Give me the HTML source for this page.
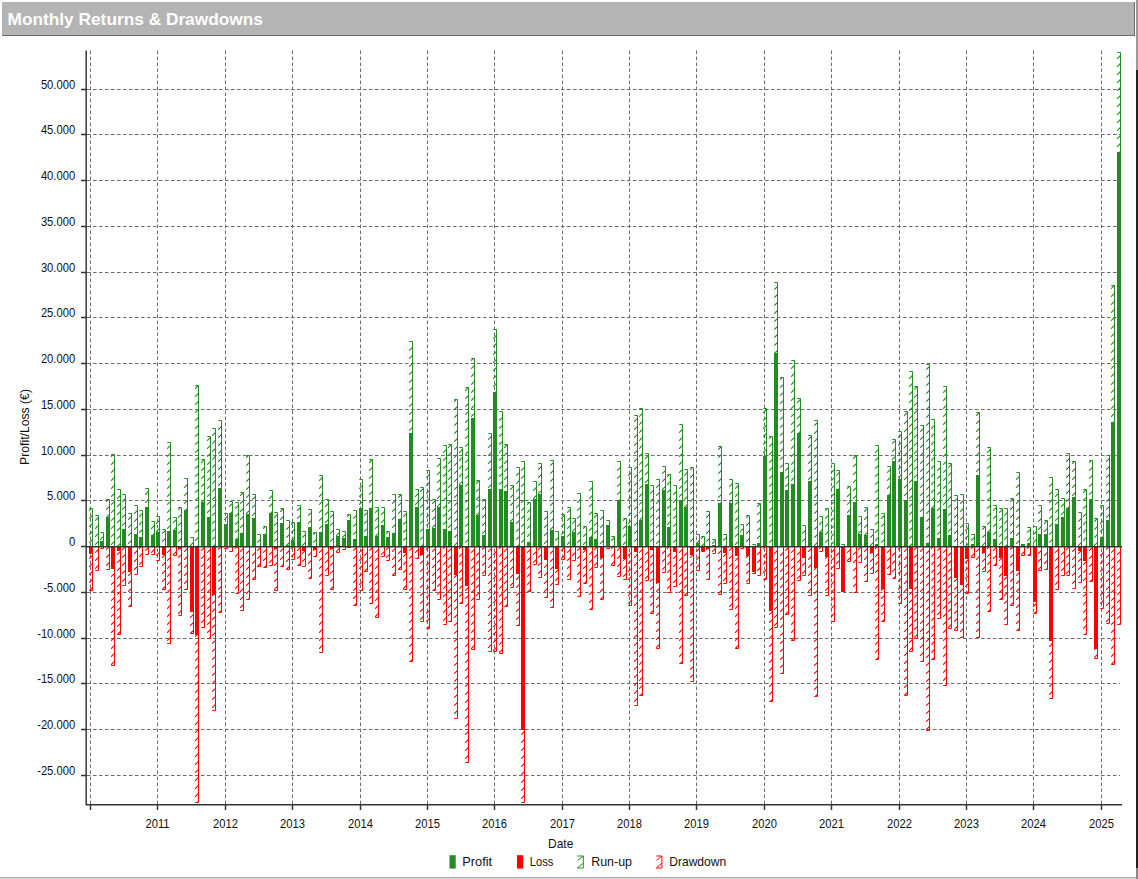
<!DOCTYPE html>
<html><head><meta charset="utf-8"><title>Monthly Returns &amp; Drawdowns</title>
<style>
html,body{margin:0;padding:0;background:#fff;}
body{width:1138px;height:879px;position:relative;overflow:hidden;font-family:"Liberation Sans",sans-serif;}
#hdr{position:absolute;left:1.5px;top:2px;width:1132.5px;height:33px;background:#b4b4b4;border-right:1.5px solid #6a6a6a;border-bottom:1.5px solid #6a6a6a;box-sizing:content-box;}
#hdr span{position:absolute;left:6px;top:6.5px;color:#fff;font-weight:bold;font-size:17.3px;line-height:20px;white-space:nowrap;}
#rb{position:absolute;left:1136px;top:0;width:2px;height:879px;background:linear-gradient(#9a9a9a 0,#9a9a9a 70px,#222 70px,#222 868px,#888 868px);}
#bb{position:absolute;left:0;top:877px;width:1136px;height:2px;background:linear-gradient(#a8a8a8 0,#a8a8a8 1px,#d8d8d8 1px);}
</style></head><body>
<div id="hdr"><span>Monthly Returns &amp; Drawdowns</span></div>
<div id="rb"></div><div id="bb"></div>
<svg width="1138" height="879" viewBox="0 0 1138 879" style="position:absolute;left:0;top:0">
<path d="M90.5 50.5V804M157.5 50.5V804M225.5 50.5V804M292.5 50.5V804M360.5 50.5V804M427.5 50.5V804M494.5 50.5V804M562.5 50.5V804M629.5 50.5V804M696.5 50.5V804M764.5 50.5V804M831.5 50.5V804M899.5 50.5V804M966.5 50.5V804M1033.5 50.5V804M1101.5 50.5V804M87 775.5H1120M87 729.5H1120M87 683.5H1120M87 638.5H1120M87 592.5H1120M87 546.5H1120M87 500.5H1120M87 455.5H1120M87 409.5H1120M87 363.5H1120M87 317.5H1120M87 272.5H1120M87 226.5H1120M87 180.5H1120M87 134.5H1120M87 89.5H1120" stroke="#6c6c6c" stroke-width="1" stroke-dasharray="3.6 2.4" fill="none"/>
<path d="M89.5 510.3L90.8 509M89.5 518.3L92.5 515.3M89.5 526.3L92.5 523.3M89.5 534.3L92.5 531.3M89.5 542.3L92.5 539.3M95.5 520.3L98.5 517.3M95.5 528.3L98.5 525.3M95.5 536.3L98.5 533.3M95.5 544.3L98.5 541.3M100.5 539.3L103.5 536.3M101.8 546L103.5 544.3M106.5 501.3L107.8 500M106.5 509.3L109.5 506.3M106.5 517.3L109.5 514.3M106.5 525.3L109.5 522.3M106.5 533.3L109.5 530.3M106.5 541.3L109.5 538.3M111.5 456.3L112.8 455M111.5 464.3L114.5 461.3M111.5 472.3L114.5 469.3M111.5 480.3L114.5 477.3M111.5 488.3L114.5 485.3M111.5 496.3L114.5 493.3M111.5 504.3L114.5 501.3M111.5 512.3L114.5 509.3M111.5 520.3L114.5 517.3M111.5 528.3L114.5 525.3M111.5 536.3L114.5 533.3M111.5 544.3L114.5 541.3M117.5 498.3L120.5 495.3M117.5 506.3L120.5 503.3M117.5 514.3L120.5 511.3M117.5 522.3L120.5 519.3M117.5 530.3L120.5 527.3M117.5 538.3L120.5 535.3M117.8 546L120.5 543.3M122.5 501.3L125.5 498.3M122.5 509.3L125.5 506.3M122.5 517.3L125.5 514.3M122.5 525.3L125.5 522.3M122.5 533.3L125.5 530.3M122.5 541.3L125.5 538.3M128.5 519.3L131.5 516.3M128.5 527.3L131.5 524.3M128.5 535.3L131.5 532.3M128.5 543.3L131.5 540.3M134.5 513.3L137.5 510.3M134.5 521.3L137.5 518.3M134.5 529.3L137.5 526.3M134.5 537.3L137.5 534.3M134.5 545.3L137.5 542.3M139.5 516.3L142.5 513.3M139.5 524.3L142.5 521.3M139.5 532.3L142.5 529.3M139.5 540.3L142.5 537.3M141.8 546L142.5 545.3M145.5 494.3L148.5 491.3M145.5 502.3L148.5 499.3M145.5 510.3L148.5 507.3M145.5 518.3L148.5 515.3M145.5 526.3L148.5 523.3M145.5 534.3L148.5 531.3M145.5 542.3L148.5 539.3M151.5 528.3L154.5 525.3M151.5 536.3L154.5 533.3M151.5 544.3L154.5 541.3M156.5 523.3L159.5 520.3M156.5 531.3L159.5 528.3M156.5 539.3L159.5 536.3M157.8 546L159.5 544.3M162.5 533.3L165.5 530.3M162.5 541.3L165.5 538.3M167.5 448.3L170.5 445.3M167.5 456.3L170.5 453.3M167.5 464.3L170.5 461.3M167.5 472.3L170.5 469.3M167.5 480.3L170.5 477.3M167.5 488.3L170.5 485.3M167.5 496.3L170.5 493.3M167.5 504.3L170.5 501.3M167.5 512.3L170.5 509.3M167.5 520.3L170.5 517.3M167.5 528.3L170.5 525.3M167.5 536.3L170.5 533.3M167.5 544.3L170.5 541.3M173.5 522.3L176.5 519.3M173.5 530.3L176.5 527.3M173.5 538.3L176.5 535.3M173.8 546L176.5 543.3M178.5 509.3L179.8 508M178.5 517.3L181.5 514.3M178.5 525.3L181.5 522.3M178.5 533.3L181.5 530.3M178.5 541.3L181.5 538.3M184.5 487.3L187.5 484.3M184.5 495.3L187.5 492.3M184.5 503.3L187.5 500.3M184.5 511.3L187.5 508.3M184.5 519.3L187.5 516.3M184.5 527.3L187.5 524.3M184.5 535.3L187.5 532.3M184.5 543.3L187.5 540.3M190.5 545.3L193.5 542.3M195.5 388.3L197.8 386M195.5 396.3L198.5 393.3M195.5 404.3L198.5 401.3M195.5 412.3L198.5 409.3M195.5 420.3L198.5 417.3M195.5 428.3L198.5 425.3M195.5 436.3L198.5 433.3M195.5 444.3L198.5 441.3M195.5 452.3L198.5 449.3M195.5 460.3L198.5 457.3M195.5 468.3L198.5 465.3M195.5 476.3L198.5 473.3M195.5 484.3L198.5 481.3M195.5 492.3L198.5 489.3M195.5 500.3L198.5 497.3M195.5 508.3L198.5 505.3M195.5 516.3L198.5 513.3M195.5 524.3L198.5 521.3M195.5 532.3L198.5 529.3M195.5 540.3L198.5 537.3M197.8 546L198.5 545.3M201.5 462.3L203.8 460M201.5 470.3L204.5 467.3M201.5 478.3L204.5 475.3M201.5 486.3L204.5 483.3M201.5 494.3L204.5 491.3M201.5 502.3L204.5 499.3M201.5 510.3L204.5 507.3M201.5 518.3L204.5 515.3M201.5 526.3L204.5 523.3M201.5 534.3L204.5 531.3M201.5 542.3L204.5 539.3M207.5 440.3L210.5 437.3M207.5 448.3L210.5 445.3M207.5 456.3L210.5 453.3M207.5 464.3L210.5 461.3M207.5 472.3L210.5 469.3M207.5 480.3L210.5 477.3M207.5 488.3L210.5 485.3M207.5 496.3L210.5 493.3M207.5 504.3L210.5 501.3M207.5 512.3L210.5 509.3M207.5 520.3L210.5 517.3M207.5 528.3L210.5 525.3M207.5 536.3L210.5 533.3M207.5 544.3L210.5 541.3M212.5 435.3L215.5 432.3M212.5 443.3L215.5 440.3M212.5 451.3L215.5 448.3M212.5 459.3L215.5 456.3M212.5 467.3L215.5 464.3M212.5 475.3L215.5 472.3M212.5 483.3L215.5 480.3M212.5 491.3L215.5 488.3M212.5 499.3L215.5 496.3M212.5 507.3L215.5 504.3M212.5 515.3L215.5 512.3M212.5 523.3L215.5 520.3M212.5 531.3L215.5 528.3M212.5 539.3L215.5 536.3M213.8 546L215.5 544.3M218.5 429.3L221.5 426.3M218.5 437.3L221.5 434.3M218.5 445.3L221.5 442.3M218.5 453.3L221.5 450.3M218.5 461.3L221.5 458.3M218.5 469.3L221.5 466.3M218.5 477.3L221.5 474.3M218.5 485.3L221.5 482.3M218.5 493.3L221.5 490.3M218.5 501.3L221.5 498.3M218.5 509.3L221.5 506.3M218.5 517.3L221.5 514.3M218.5 525.3L221.5 522.3M218.5 533.3L221.5 530.3M218.5 541.3L221.5 538.3M224.5 519.3L227.5 516.3M224.5 527.3L227.5 524.3M224.5 535.3L227.5 532.3M224.5 543.3L227.5 540.3M229.5 506.3L232.5 503.3M229.5 514.3L232.5 511.3M229.5 522.3L232.5 519.3M229.5 530.3L232.5 527.3M229.5 538.3L232.5 535.3M229.8 546L232.5 543.3M235.5 508.3L238.5 505.3M235.5 516.3L238.5 513.3M235.5 524.3L238.5 521.3M235.5 532.3L238.5 529.3M235.5 540.3L238.5 537.3M237.8 546L238.5 545.3M240.5 495.3L242.8 493M240.5 503.3L243.5 500.3M240.5 511.3L243.5 508.3M240.5 519.3L243.5 516.3M240.5 527.3L243.5 524.3M240.5 535.3L243.5 532.3M240.5 543.3L243.5 540.3M246.5 457.3L247.8 456M246.5 465.3L249.5 462.3M246.5 473.3L249.5 470.3M246.5 481.3L249.5 478.3M246.5 489.3L249.5 486.3M246.5 497.3L249.5 494.3M246.5 505.3L249.5 502.3M246.5 513.3L249.5 510.3M246.5 521.3L249.5 518.3M246.5 529.3L249.5 526.3M246.5 537.3L249.5 534.3M246.5 545.3L249.5 542.3M252.5 499.3L255.5 496.3M252.5 507.3L255.5 504.3M252.5 515.3L255.5 512.3M252.5 523.3L255.5 520.3M252.5 531.3L255.5 528.3M252.5 539.3L255.5 536.3M253.8 546L255.5 544.3M257.5 542.3L260.5 539.3M263.5 528.3L264.8 527M263.5 536.3L266.5 533.3M263.5 544.3L266.5 541.3M269.5 498.3L272.5 495.3M269.5 506.3L272.5 503.3M269.5 514.3L272.5 511.3M269.5 522.3L272.5 519.3M269.5 530.3L272.5 527.3M269.5 538.3L272.5 535.3M269.8 546L272.5 543.3M274.5 517.3L277.5 514.3M274.5 525.3L277.5 522.3M274.5 533.3L277.5 530.3M274.5 541.3L277.5 538.3M280.5 511.3L282.8 509M280.5 519.3L283.5 516.3M280.5 527.3L283.5 524.3M280.5 535.3L283.5 532.3M280.5 543.3L283.5 540.3M286.5 529.3L289.5 526.3M286.5 537.3L289.5 534.3M286.5 545.3L289.5 542.3M291.5 524.3L292.8 523M291.5 532.3L294.5 529.3M291.5 540.3L294.5 537.3M293.8 546L294.5 545.3M297.5 510.3L300.5 507.3M297.5 518.3L300.5 515.3M297.5 526.3L300.5 523.3M297.5 534.3L300.5 531.3M297.5 542.3L300.5 539.3M302.5 537.3L305.5 534.3M302.5 545.3L305.5 542.3M308.5 515.3L311.5 512.3M308.5 523.3L311.5 520.3M308.5 531.3L311.5 528.3M308.5 539.3L311.5 536.3M309.8 546L311.5 544.3M313.5 534.3L314.8 533M313.5 542.3L316.5 539.3M319.5 480.3L322.5 477.3M319.5 488.3L322.5 485.3M319.5 496.3L322.5 493.3M319.5 504.3L322.5 501.3M319.5 512.3L322.5 509.3M319.5 520.3L322.5 517.3M319.5 528.3L322.5 525.3M319.5 536.3L322.5 533.3M319.5 544.3L322.5 541.3M325.5 506.3L328.5 503.3M325.5 514.3L328.5 511.3M325.5 522.3L328.5 519.3M325.5 530.3L328.5 527.3M325.5 538.3L328.5 535.3M325.8 546L328.5 543.3M330.5 517.3L333.5 514.3M330.5 525.3L333.5 522.3M330.5 533.3L333.5 530.3M330.5 541.3L333.5 538.3M336.5 535.3L339.5 532.3M336.5 543.3L339.5 540.3M342.5 537.3L345.5 534.3M342.5 545.3L345.5 542.3M347.5 516.3L348.8 515M347.5 524.3L350.5 521.3M347.5 532.3L350.5 529.3M347.5 540.3L350.5 537.3M349.8 546L350.5 545.3M353.5 518.3L356.5 515.3M353.5 526.3L356.5 523.3M353.5 534.3L356.5 531.3M353.5 542.3L356.5 539.3M359.5 488.3L362.5 485.3M359.5 496.3L362.5 493.3M359.5 504.3L362.5 501.3M359.5 512.3L362.5 509.3M359.5 520.3L362.5 517.3M359.5 528.3L362.5 525.3M359.5 536.3L362.5 533.3M359.5 544.3L362.5 541.3M364.5 515.3L367.5 512.3M364.5 523.3L367.5 520.3M364.5 531.3L367.5 528.3M364.5 539.3L367.5 536.3M365.8 546L367.5 544.3M369.5 462.3L371.8 460M369.5 470.3L372.5 467.3M369.5 478.3L372.5 475.3M369.5 486.3L372.5 483.3M369.5 494.3L372.5 491.3M369.5 502.3L372.5 499.3M369.5 510.3L372.5 507.3M369.5 518.3L372.5 515.3M369.5 526.3L372.5 523.3M369.5 534.3L372.5 531.3M369.5 542.3L372.5 539.3M375.5 512.3L378.5 509.3M375.5 520.3L378.5 517.3M375.5 528.3L378.5 525.3M375.5 536.3L378.5 533.3M375.5 544.3L378.5 541.3M381.5 514.3L384.5 511.3M381.5 522.3L384.5 519.3M381.5 530.3L384.5 527.3M381.5 538.3L384.5 535.3M381.8 546L384.5 543.3M386.5 533.3L387.8 532M386.5 541.3L389.5 538.3M392.5 503.3L395.5 500.3M392.5 511.3L395.5 508.3M392.5 519.3L395.5 516.3M392.5 527.3L395.5 524.3M392.5 535.3L395.5 532.3M392.5 543.3L395.5 540.3M398.5 497.3L400.8 495M398.5 505.3L401.5 502.3M398.5 513.3L401.5 510.3M398.5 521.3L401.5 518.3M398.5 529.3L401.5 526.3M398.5 537.3L401.5 534.3M398.5 545.3L401.5 542.3M403.5 516.3L406.5 513.3M403.5 524.3L406.5 521.3M403.5 532.3L406.5 529.3M403.5 540.3L406.5 537.3M405.8 546L406.5 545.3M409.5 350.3L412.5 347.3M409.5 358.3L412.5 355.3M409.5 366.3L412.5 363.3M409.5 374.3L412.5 371.3M409.5 382.3L412.5 379.3M409.5 390.3L412.5 387.3M409.5 398.3L412.5 395.3M409.5 406.3L412.5 403.3M409.5 414.3L412.5 411.3M409.5 422.3L412.5 419.3M409.5 430.3L412.5 427.3M409.5 438.3L412.5 435.3M409.5 446.3L412.5 443.3M409.5 454.3L412.5 451.3M409.5 462.3L412.5 459.3M409.5 470.3L412.5 467.3M409.5 478.3L412.5 475.3M409.5 486.3L412.5 483.3M409.5 494.3L412.5 491.3M409.5 502.3L412.5 499.3M409.5 510.3L412.5 507.3M409.5 518.3L412.5 515.3M409.5 526.3L412.5 523.3M409.5 534.3L412.5 531.3M409.5 542.3L412.5 539.3M415.5 496.3L418.5 493.3M415.5 504.3L418.5 501.3M415.5 512.3L418.5 509.3M415.5 520.3L418.5 517.3M415.5 528.3L418.5 525.3M415.5 536.3L418.5 533.3M415.5 544.3L418.5 541.3M420.5 491.3L423.5 488.3M420.5 499.3L423.5 496.3M420.5 507.3L423.5 504.3M420.5 515.3L423.5 512.3M420.5 523.3L423.5 520.3M420.5 531.3L423.5 528.3M420.5 539.3L423.5 536.3M421.8 546L423.5 544.3M426.5 477.3L429.5 474.3M426.5 485.3L429.5 482.3M426.5 493.3L429.5 490.3M426.5 501.3L429.5 498.3M426.5 509.3L429.5 506.3M426.5 517.3L429.5 514.3M426.5 525.3L429.5 522.3M426.5 533.3L429.5 530.3M426.5 541.3L429.5 538.3M432.5 503.3L435.5 500.3M432.5 511.3L435.5 508.3M432.5 519.3L435.5 516.3M432.5 527.3L435.5 524.3M432.5 535.3L435.5 532.3M432.5 543.3L435.5 540.3M437.5 466.3L440.5 463.3M437.5 474.3L440.5 471.3M437.5 482.3L440.5 479.3M437.5 490.3L440.5 487.3M437.5 498.3L440.5 495.3M437.5 506.3L440.5 503.3M437.5 514.3L440.5 511.3M437.5 522.3L440.5 519.3M437.5 530.3L440.5 527.3M437.5 538.3L440.5 535.3M437.8 546L440.5 543.3M443.5 452.3L446.5 449.3M443.5 460.3L446.5 457.3M443.5 468.3L446.5 465.3M443.5 476.3L446.5 473.3M443.5 484.3L446.5 481.3M443.5 492.3L446.5 489.3M443.5 500.3L446.5 497.3M443.5 508.3L446.5 505.3M443.5 516.3L446.5 513.3M443.5 524.3L446.5 521.3M443.5 532.3L446.5 529.3M443.5 540.3L446.5 537.3M445.8 546L446.5 545.3M448.5 447.3L450.8 445M448.5 455.3L451.5 452.3M448.5 463.3L451.5 460.3M448.5 471.3L451.5 468.3M448.5 479.3L451.5 476.3M448.5 487.3L451.5 484.3M448.5 495.3L451.5 492.3M448.5 503.3L451.5 500.3M448.5 511.3L451.5 508.3M448.5 519.3L451.5 516.3M448.5 527.3L451.5 524.3M448.5 535.3L451.5 532.3M448.5 543.3L451.5 540.3M454.5 401.3L455.8 400M454.5 409.3L457.5 406.3M454.5 417.3L457.5 414.3M454.5 425.3L457.5 422.3M454.5 433.3L457.5 430.3M454.5 441.3L457.5 438.3M454.5 449.3L457.5 446.3M454.5 457.3L457.5 454.3M454.5 465.3L457.5 462.3M454.5 473.3L457.5 470.3M454.5 481.3L457.5 478.3M454.5 489.3L457.5 486.3M454.5 497.3L457.5 494.3M454.5 505.3L457.5 502.3M454.5 513.3L457.5 510.3M454.5 521.3L457.5 518.3M454.5 529.3L457.5 526.3M454.5 537.3L457.5 534.3M454.5 545.3L457.5 542.3M459.5 452.3L462.5 449.3M459.5 460.3L462.5 457.3M459.5 468.3L462.5 465.3M459.5 476.3L462.5 473.3M459.5 484.3L462.5 481.3M459.5 492.3L462.5 489.3M459.5 500.3L462.5 497.3M459.5 508.3L462.5 505.3M459.5 516.3L462.5 513.3M459.5 524.3L462.5 521.3M459.5 532.3L462.5 529.3M459.5 540.3L462.5 537.3M461.8 546L462.5 545.3M465.5 390.3L467.8 388M465.5 398.3L468.5 395.3M465.5 406.3L468.5 403.3M465.5 414.3L468.5 411.3M465.5 422.3L468.5 419.3M465.5 430.3L468.5 427.3M465.5 438.3L468.5 435.3M465.5 446.3L468.5 443.3M465.5 454.3L468.5 451.3M465.5 462.3L468.5 459.3M465.5 470.3L468.5 467.3M465.5 478.3L468.5 475.3M465.5 486.3L468.5 483.3M465.5 494.3L468.5 491.3M465.5 502.3L468.5 499.3M465.5 510.3L468.5 507.3M465.5 518.3L468.5 515.3M465.5 526.3L468.5 523.3M465.5 534.3L468.5 531.3M465.5 542.3L468.5 539.3M471.5 360.3L472.8 359M471.5 368.3L474.5 365.3M471.5 376.3L474.5 373.3M471.5 384.3L474.5 381.3M471.5 392.3L474.5 389.3M471.5 400.3L474.5 397.3M471.5 408.3L474.5 405.3M471.5 416.3L474.5 413.3M471.5 424.3L474.5 421.3M471.5 432.3L474.5 429.3M471.5 440.3L474.5 437.3M471.5 448.3L474.5 445.3M471.5 456.3L474.5 453.3M471.5 464.3L474.5 461.3M471.5 472.3L474.5 469.3M471.5 480.3L474.5 477.3M471.5 488.3L474.5 485.3M471.5 496.3L474.5 493.3M471.5 504.3L474.5 501.3M471.5 512.3L474.5 509.3M471.5 520.3L474.5 517.3M471.5 528.3L474.5 525.3M471.5 536.3L474.5 533.3M471.5 544.3L474.5 541.3M476.5 483.3L478.8 481M476.5 491.3L479.5 488.3M476.5 499.3L479.5 496.3M476.5 507.3L479.5 504.3M476.5 515.3L479.5 512.3M476.5 523.3L479.5 520.3M476.5 531.3L479.5 528.3M476.5 539.3L479.5 536.3M477.8 546L479.5 544.3M482.5 501.3L483.8 500M482.5 509.3L485.5 506.3M482.5 517.3L485.5 514.3M482.5 525.3L485.5 522.3M482.5 533.3L485.5 530.3M482.5 541.3L485.5 538.3M488.5 439.3L491.5 436.3M488.5 447.3L491.5 444.3M488.5 455.3L491.5 452.3M488.5 463.3L491.5 460.3M488.5 471.3L491.5 468.3M488.5 479.3L491.5 476.3M488.5 487.3L491.5 484.3M488.5 495.3L491.5 492.3M488.5 503.3L491.5 500.3M488.5 511.3L491.5 508.3M488.5 519.3L491.5 516.3M488.5 527.3L491.5 524.3M488.5 535.3L491.5 532.3M488.5 543.3L491.5 540.3M493.5 338.3L496.5 335.3M493.5 346.3L496.5 343.3M493.5 354.3L496.5 351.3M493.5 362.3L496.5 359.3M493.5 370.3L496.5 367.3M493.5 378.3L496.5 375.3M493.5 386.3L496.5 383.3M493.5 394.3L496.5 391.3M493.5 402.3L496.5 399.3M493.5 410.3L496.5 407.3M493.5 418.3L496.5 415.3M493.5 426.3L496.5 423.3M493.5 434.3L496.5 431.3M493.5 442.3L496.5 439.3M493.5 450.3L496.5 447.3M493.5 458.3L496.5 455.3M493.5 466.3L496.5 463.3M493.5 474.3L496.5 471.3M493.5 482.3L496.5 479.3M493.5 490.3L496.5 487.3M493.5 498.3L496.5 495.3M493.5 506.3L496.5 503.3M493.5 514.3L496.5 511.3M493.5 522.3L496.5 519.3M493.5 530.3L496.5 527.3M493.5 538.3L496.5 535.3M493.8 546L496.5 543.3M499.5 420.3L502.5 417.3M499.5 428.3L502.5 425.3M499.5 436.3L502.5 433.3M499.5 444.3L502.5 441.3M499.5 452.3L502.5 449.3M499.5 460.3L502.5 457.3M499.5 468.3L502.5 465.3M499.5 476.3L502.5 473.3M499.5 484.3L502.5 481.3M499.5 492.3L502.5 489.3M499.5 500.3L502.5 497.3M499.5 508.3L502.5 505.3M499.5 516.3L502.5 513.3M499.5 524.3L502.5 521.3M499.5 532.3L502.5 529.3M499.5 540.3L502.5 537.3M501.8 546L502.5 545.3M504.5 447.3L506.8 445M504.5 455.3L507.5 452.3M504.5 463.3L507.5 460.3M504.5 471.3L507.5 468.3M504.5 479.3L507.5 476.3M504.5 487.3L507.5 484.3M504.5 495.3L507.5 492.3M504.5 503.3L507.5 500.3M504.5 511.3L507.5 508.3M504.5 519.3L507.5 516.3M504.5 527.3L507.5 524.3M504.5 535.3L507.5 532.3M504.5 543.3L507.5 540.3M510.5 489.3L513.5 486.3M510.5 497.3L513.5 494.3M510.5 505.3L513.5 502.3M510.5 513.3L513.5 510.3M510.5 521.3L513.5 518.3M510.5 529.3L513.5 526.3M510.5 537.3L513.5 534.3M510.5 545.3L513.5 542.3M516.5 475.3L519.5 472.3M516.5 483.3L519.5 480.3M516.5 491.3L519.5 488.3M516.5 499.3L519.5 496.3M516.5 507.3L519.5 504.3M516.5 515.3L519.5 512.3M516.5 523.3L519.5 520.3M516.5 531.3L519.5 528.3M516.5 539.3L519.5 536.3M517.8 546L519.5 544.3M521.5 470.3L524.5 467.3M521.5 478.3L524.5 475.3M521.5 486.3L524.5 483.3M521.5 494.3L524.5 491.3M521.5 502.3L524.5 499.3M521.5 510.3L524.5 507.3M521.5 518.3L524.5 515.3M521.5 526.3L524.5 523.3M521.5 534.3L524.5 531.3M521.5 542.3L524.5 539.3M527.5 504.3L528.8 503M527.5 512.3L530.5 509.3M527.5 520.3L530.5 517.3M527.5 528.3L530.5 525.3M527.5 536.3L530.5 533.3M527.5 544.3L530.5 541.3M533.5 490.3L536.5 487.3M533.5 498.3L536.5 495.3M533.5 506.3L536.5 503.3M533.5 514.3L536.5 511.3M533.5 522.3L536.5 519.3M533.5 530.3L536.5 527.3M533.5 538.3L536.5 535.3M533.8 546L536.5 543.3M538.5 469.3L541.5 466.3M538.5 477.3L541.5 474.3M538.5 485.3L541.5 482.3M538.5 493.3L541.5 490.3M538.5 501.3L541.5 498.3M538.5 509.3L541.5 506.3M538.5 517.3L541.5 514.3M538.5 525.3L541.5 522.3M538.5 533.3L541.5 530.3M538.5 541.3L541.5 538.3M544.5 519.3L547.5 516.3M544.5 527.3L547.5 524.3M544.5 535.3L547.5 532.3M544.5 543.3L547.5 540.3M550.5 465.3L553.5 462.3M550.5 473.3L553.5 470.3M550.5 481.3L553.5 478.3M550.5 489.3L553.5 486.3M550.5 497.3L553.5 494.3M550.5 505.3L553.5 502.3M550.5 513.3L553.5 510.3M550.5 521.3L553.5 518.3M550.5 529.3L553.5 526.3M550.5 537.3L553.5 534.3M550.5 545.3L553.5 542.3M555.5 540.3L558.5 537.3M557.8 546L558.5 545.3M561.5 518.3L564.5 515.3M561.5 526.3L564.5 523.3M561.5 534.3L564.5 531.3M561.5 542.3L564.5 539.3M567.5 512.3L570.5 509.3M567.5 520.3L570.5 517.3M567.5 528.3L570.5 525.3M567.5 536.3L570.5 533.3M567.5 544.3L570.5 541.3M572.5 523.3L575.5 520.3M572.5 531.3L575.5 528.3M572.5 539.3L575.5 536.3M573.8 546L575.5 544.3M577.5 502.3L580.5 499.3M577.5 510.3L580.5 507.3M577.5 518.3L580.5 515.3M577.5 526.3L580.5 523.3M577.5 534.3L580.5 531.3M577.5 542.3L580.5 539.3M583.5 528.3L584.8 527M583.5 536.3L586.5 533.3M583.5 544.3L586.5 541.3M589.5 490.3L592.5 487.3M589.5 498.3L592.5 495.3M589.5 506.3L592.5 503.3M589.5 514.3L592.5 511.3M589.5 522.3L592.5 519.3M589.5 530.3L592.5 527.3M589.5 538.3L592.5 535.3M589.8 546L592.5 543.3M594.5 517.3L597.5 514.3M594.5 525.3L597.5 522.3M594.5 533.3L597.5 530.3M594.5 541.3L597.5 538.3M600.5 519.3L603.5 516.3M600.5 527.3L603.5 524.3M600.5 535.3L603.5 532.3M600.5 543.3L603.5 540.3M606.5 529.3L609.5 526.3M606.5 537.3L609.5 534.3M606.5 545.3L609.5 542.3M611.5 540.3L614.5 537.3M613.8 546L614.5 545.3M617.5 470.3L620.5 467.3M617.5 478.3L620.5 475.3M617.5 486.3L620.5 483.3M617.5 494.3L620.5 491.3M617.5 502.3L620.5 499.3M617.5 510.3L620.5 507.3M617.5 518.3L620.5 515.3M617.5 526.3L620.5 523.3M617.5 534.3L620.5 531.3M617.5 542.3L620.5 539.3M623.5 520.3L624.8 519M623.5 528.3L626.5 525.3M623.5 536.3L626.5 533.3M623.5 544.3L626.5 541.3M628.5 475.3L631.5 472.3M628.5 483.3L631.5 480.3M628.5 491.3L631.5 488.3M628.5 499.3L631.5 496.3M628.5 507.3L631.5 504.3M628.5 515.3L631.5 512.3M628.5 523.3L631.5 520.3M628.5 531.3L631.5 528.3M628.5 539.3L631.5 536.3M629.8 546L631.5 544.3M634.5 421.3L637.5 418.3M634.5 429.3L637.5 426.3M634.5 437.3L637.5 434.3M634.5 445.3L637.5 442.3M634.5 453.3L637.5 450.3M634.5 461.3L637.5 458.3M634.5 469.3L637.5 466.3M634.5 477.3L637.5 474.3M634.5 485.3L637.5 482.3M634.5 493.3L637.5 490.3M634.5 501.3L637.5 498.3M634.5 509.3L637.5 506.3M634.5 517.3L637.5 514.3M634.5 525.3L637.5 522.3M634.5 533.3L637.5 530.3M634.5 541.3L637.5 538.3M639.5 416.3L642.5 413.3M639.5 424.3L642.5 421.3M639.5 432.3L642.5 429.3M639.5 440.3L642.5 437.3M639.5 448.3L642.5 445.3M639.5 456.3L642.5 453.3M639.5 464.3L642.5 461.3M639.5 472.3L642.5 469.3M639.5 480.3L642.5 477.3M639.5 488.3L642.5 485.3M639.5 496.3L642.5 493.3M639.5 504.3L642.5 501.3M639.5 512.3L642.5 509.3M639.5 520.3L642.5 517.3M639.5 528.3L642.5 525.3M639.5 536.3L642.5 533.3M639.5 544.3L642.5 541.3M645.5 458.3L648.5 455.3M645.5 466.3L648.5 463.3M645.5 474.3L648.5 471.3M645.5 482.3L648.5 479.3M645.5 490.3L648.5 487.3M645.5 498.3L648.5 495.3M645.5 506.3L648.5 503.3M645.5 514.3L648.5 511.3M645.5 522.3L648.5 519.3M645.5 530.3L648.5 527.3M645.5 538.3L648.5 535.3M645.8 546L648.5 543.3M650.5 493.3L653.5 490.3M650.5 501.3L653.5 498.3M650.5 509.3L653.5 506.3M650.5 517.3L653.5 514.3M650.5 525.3L653.5 522.3M650.5 533.3L653.5 530.3M650.5 541.3L653.5 538.3M656.5 487.3L659.5 484.3M656.5 495.3L659.5 492.3M656.5 503.3L659.5 500.3M656.5 511.3L659.5 508.3M656.5 519.3L659.5 516.3M656.5 527.3L659.5 524.3M656.5 535.3L659.5 532.3M656.5 543.3L659.5 540.3M662.5 473.3L665.5 470.3M662.5 481.3L665.5 478.3M662.5 489.3L665.5 486.3M662.5 497.3L665.5 494.3M662.5 505.3L665.5 502.3M662.5 513.3L665.5 510.3M662.5 521.3L665.5 518.3M662.5 529.3L665.5 526.3M662.5 537.3L665.5 534.3M662.5 545.3L665.5 542.3M667.5 476.3L668.8 475M667.5 484.3L670.5 481.3M667.5 492.3L670.5 489.3M667.5 500.3L670.5 497.3M667.5 508.3L670.5 505.3M667.5 516.3L670.5 513.3M667.5 524.3L670.5 521.3M667.5 532.3L670.5 529.3M667.5 540.3L670.5 537.3M669.8 546L670.5 545.3M673.5 494.3L676.5 491.3M673.5 502.3L676.5 499.3M673.5 510.3L676.5 507.3M673.5 518.3L676.5 515.3M673.5 526.3L676.5 523.3M673.5 534.3L676.5 531.3M673.5 542.3L676.5 539.3M679.5 432.3L682.5 429.3M679.5 440.3L682.5 437.3M679.5 448.3L682.5 445.3M679.5 456.3L682.5 453.3M679.5 464.3L682.5 461.3M679.5 472.3L682.5 469.3M679.5 480.3L682.5 477.3M679.5 488.3L682.5 485.3M679.5 496.3L682.5 493.3M679.5 504.3L682.5 501.3M679.5 512.3L682.5 509.3M679.5 520.3L682.5 517.3M679.5 528.3L682.5 525.3M679.5 536.3L682.5 533.3M679.5 544.3L682.5 541.3M684.5 475.3L687.5 472.3M684.5 483.3L687.5 480.3M684.5 491.3L687.5 488.3M684.5 499.3L687.5 496.3M684.5 507.3L687.5 504.3M684.5 515.3L687.5 512.3M684.5 523.3L687.5 520.3M684.5 531.3L687.5 528.3M684.5 539.3L687.5 536.3M685.8 546L687.5 544.3M690.5 469.3L691.8 468M690.5 477.3L693.5 474.3M690.5 485.3L693.5 482.3M690.5 493.3L693.5 490.3M690.5 501.3L693.5 498.3M690.5 509.3L693.5 506.3M690.5 517.3L693.5 514.3M690.5 525.3L693.5 522.3M690.5 533.3L693.5 530.3M690.5 541.3L693.5 538.3M696.5 543.3L699.5 540.3M701.5 538.3L702.8 537M701.8 546L704.5 543.3M706.5 517.3L709.5 514.3M706.5 525.3L709.5 522.3M706.5 533.3L709.5 530.3M706.5 541.3L709.5 538.3M712.5 543.3L715.5 540.3M718.5 449.3L720.8 447M718.5 457.3L721.5 454.3M718.5 465.3L721.5 462.3M718.5 473.3L721.5 470.3M718.5 481.3L721.5 478.3M718.5 489.3L721.5 486.3M718.5 497.3L721.5 494.3M718.5 505.3L721.5 502.3M718.5 513.3L721.5 510.3M718.5 521.3L721.5 518.3M718.5 529.3L721.5 526.3M718.5 537.3L721.5 534.3M718.5 545.3L721.5 542.3M723.5 540.3L726.5 537.3M725.8 546L726.5 545.3M729.5 486.3L732.5 483.3M729.5 494.3L732.5 491.3M729.5 502.3L732.5 499.3M729.5 510.3L732.5 507.3M729.5 518.3L732.5 515.3M729.5 526.3L732.5 523.3M729.5 534.3L732.5 531.3M729.5 542.3L732.5 539.3M735.5 488.3L738.5 485.3M735.5 496.3L738.5 493.3M735.5 504.3L738.5 501.3M735.5 512.3L738.5 509.3M735.5 520.3L738.5 517.3M735.5 528.3L738.5 525.3M735.5 536.3L738.5 533.3M735.5 544.3L738.5 541.3M740.5 531.3L743.5 528.3M740.5 539.3L743.5 536.3M741.8 546L743.5 544.3M746.5 517.3L747.8 516M746.5 525.3L749.5 522.3M746.5 533.3L749.5 530.3M746.5 541.3L749.5 538.3M757.5 506.3L759.8 504M757.5 514.3L760.5 511.3M757.5 522.3L760.5 519.3M757.5 530.3L760.5 527.3M757.5 538.3L760.5 535.3M757.8 546L760.5 543.3M763.5 412.3L766.5 409.3M763.5 420.3L766.5 417.3M763.5 428.3L766.5 425.3M763.5 436.3L766.5 433.3M763.5 444.3L766.5 441.3M763.5 452.3L766.5 449.3M763.5 460.3L766.5 457.3M763.5 468.3L766.5 465.3M763.5 476.3L766.5 473.3M763.5 484.3L766.5 481.3M763.5 492.3L766.5 489.3M763.5 500.3L766.5 497.3M763.5 508.3L766.5 505.3M763.5 516.3L766.5 513.3M763.5 524.3L766.5 521.3M763.5 532.3L766.5 529.3M763.5 540.3L766.5 537.3M765.8 546L766.5 545.3M769.5 438.3L770.8 437M769.5 446.3L772.5 443.3M769.5 454.3L772.5 451.3M769.5 462.3L772.5 459.3M769.5 470.3L772.5 467.3M769.5 478.3L772.5 475.3M769.5 486.3L772.5 483.3M769.5 494.3L772.5 491.3M769.5 502.3L772.5 499.3M769.5 510.3L772.5 507.3M769.5 518.3L772.5 515.3M769.5 526.3L772.5 523.3M769.5 534.3L772.5 531.3M769.5 542.3L772.5 539.3M774.5 289.3L777.5 286.3M774.5 297.3L777.5 294.3M774.5 305.3L777.5 302.3M774.5 313.3L777.5 310.3M774.5 321.3L777.5 318.3M774.5 329.3L777.5 326.3M774.5 337.3L777.5 334.3M774.5 345.3L777.5 342.3M774.5 353.3L777.5 350.3M774.5 361.3L777.5 358.3M774.5 369.3L777.5 366.3M774.5 377.3L777.5 374.3M774.5 385.3L777.5 382.3M774.5 393.3L777.5 390.3M774.5 401.3L777.5 398.3M774.5 409.3L777.5 406.3M774.5 417.3L777.5 414.3M774.5 425.3L777.5 422.3M774.5 433.3L777.5 430.3M774.5 441.3L777.5 438.3M774.5 449.3L777.5 446.3M774.5 457.3L777.5 454.3M774.5 465.3L777.5 462.3M774.5 473.3L777.5 470.3M774.5 481.3L777.5 478.3M774.5 489.3L777.5 486.3M774.5 497.3L777.5 494.3M774.5 505.3L777.5 502.3M774.5 513.3L777.5 510.3M774.5 521.3L777.5 518.3M774.5 529.3L777.5 526.3M774.5 537.3L777.5 534.3M774.5 545.3L777.5 542.3M780.5 379.3L781.8 378M780.5 387.3L783.5 384.3M780.5 395.3L783.5 392.3M780.5 403.3L783.5 400.3M780.5 411.3L783.5 408.3M780.5 419.3L783.5 416.3M780.5 427.3L783.5 424.3M780.5 435.3L783.5 432.3M780.5 443.3L783.5 440.3M780.5 451.3L783.5 448.3M780.5 459.3L783.5 456.3M780.5 467.3L783.5 464.3M780.5 475.3L783.5 472.3M780.5 483.3L783.5 480.3M780.5 491.3L783.5 488.3M780.5 499.3L783.5 496.3M780.5 507.3L783.5 504.3M780.5 515.3L783.5 512.3M780.5 523.3L783.5 520.3M780.5 531.3L783.5 528.3M780.5 539.3L783.5 536.3M781.8 546L783.5 544.3M785.5 470.3L788.5 467.3M785.5 478.3L788.5 475.3M785.5 486.3L788.5 483.3M785.5 494.3L788.5 491.3M785.5 502.3L788.5 499.3M785.5 510.3L788.5 507.3M785.5 518.3L788.5 515.3M785.5 526.3L788.5 523.3M785.5 534.3L788.5 531.3M785.5 542.3L788.5 539.3M791.5 368.3L794.5 365.3M791.5 376.3L794.5 373.3M791.5 384.3L794.5 381.3M791.5 392.3L794.5 389.3M791.5 400.3L794.5 397.3M791.5 408.3L794.5 405.3M791.5 416.3L794.5 413.3M791.5 424.3L794.5 421.3M791.5 432.3L794.5 429.3M791.5 440.3L794.5 437.3M791.5 448.3L794.5 445.3M791.5 456.3L794.5 453.3M791.5 464.3L794.5 461.3M791.5 472.3L794.5 469.3M791.5 480.3L794.5 477.3M791.5 488.3L794.5 485.3M791.5 496.3L794.5 493.3M791.5 504.3L794.5 501.3M791.5 512.3L794.5 509.3M791.5 520.3L794.5 517.3M791.5 528.3L794.5 525.3M791.5 536.3L794.5 533.3M791.5 544.3L794.5 541.3M797.5 402.3L800.5 399.3M797.5 410.3L800.5 407.3M797.5 418.3L800.5 415.3M797.5 426.3L800.5 423.3M797.5 434.3L800.5 431.3M797.5 442.3L800.5 439.3M797.5 450.3L800.5 447.3M797.5 458.3L800.5 455.3M797.5 466.3L800.5 463.3M797.5 474.3L800.5 471.3M797.5 482.3L800.5 479.3M797.5 490.3L800.5 487.3M797.5 498.3L800.5 495.3M797.5 506.3L800.5 503.3M797.5 514.3L800.5 511.3M797.5 522.3L800.5 519.3M797.5 530.3L800.5 527.3M797.5 538.3L800.5 535.3M797.8 546L800.5 543.3M802.5 533.3L805.5 530.3M802.5 541.3L805.5 538.3M808.5 439.3L811.5 436.3M808.5 447.3L811.5 444.3M808.5 455.3L811.5 452.3M808.5 463.3L811.5 460.3M808.5 471.3L811.5 468.3M808.5 479.3L811.5 476.3M808.5 487.3L811.5 484.3M808.5 495.3L811.5 492.3M808.5 503.3L811.5 500.3M808.5 511.3L811.5 508.3M808.5 519.3L811.5 516.3M808.5 527.3L811.5 524.3M808.5 535.3L811.5 532.3M808.5 543.3L811.5 540.3M814.5 425.3L817.5 422.3M814.5 433.3L817.5 430.3M814.5 441.3L817.5 438.3M814.5 449.3L817.5 446.3M814.5 457.3L817.5 454.3M814.5 465.3L817.5 462.3M814.5 473.3L817.5 470.3M814.5 481.3L817.5 478.3M814.5 489.3L817.5 486.3M814.5 497.3L817.5 494.3M814.5 505.3L817.5 502.3M814.5 513.3L817.5 510.3M814.5 521.3L817.5 518.3M814.5 529.3L817.5 526.3M814.5 537.3L817.5 534.3M814.5 545.3L817.5 542.3M819.5 524.3L822.5 521.3M819.5 532.3L822.5 529.3M819.5 540.3L822.5 537.3M821.8 546L822.5 545.3M825.5 510.3L826.8 509M825.5 518.3L828.5 515.3M825.5 526.3L828.5 523.3M825.5 534.3L828.5 531.3M825.5 542.3L828.5 539.3M831.5 472.3L834.5 469.3M831.5 480.3L834.5 477.3M831.5 488.3L834.5 485.3M831.5 496.3L834.5 493.3M831.5 504.3L834.5 501.3M831.5 512.3L834.5 509.3M831.5 520.3L834.5 517.3M831.5 528.3L834.5 525.3M831.5 536.3L834.5 533.3M831.5 544.3L834.5 541.3M836.5 475.3L839.5 472.3M836.5 483.3L839.5 480.3M836.5 491.3L839.5 488.3M836.5 499.3L839.5 496.3M836.5 507.3L839.5 504.3M836.5 515.3L839.5 512.3M836.5 523.3L839.5 520.3M836.5 531.3L839.5 528.3M836.5 539.3L839.5 536.3M837.8 546L839.5 544.3M847.5 488.3L848.8 487M847.5 496.3L850.5 493.3M847.5 504.3L850.5 501.3M847.5 512.3L850.5 509.3M847.5 520.3L850.5 517.3M847.5 528.3L850.5 525.3M847.5 536.3L850.5 533.3M847.5 544.3L850.5 541.3M853.5 458.3L855.8 456M853.5 466.3L856.5 463.3M853.5 474.3L856.5 471.3M853.5 482.3L856.5 479.3M853.5 490.3L856.5 487.3M853.5 498.3L856.5 495.3M853.5 506.3L856.5 503.3M853.5 514.3L856.5 511.3M853.5 522.3L856.5 519.3M853.5 530.3L856.5 527.3M853.5 538.3L856.5 535.3M853.8 546L856.5 543.3M858.5 525.3L861.5 522.3M858.5 533.3L861.5 530.3M858.5 541.3L861.5 538.3M864.5 511.3L867.5 508.3M864.5 519.3L867.5 516.3M864.5 527.3L867.5 524.3M864.5 535.3L867.5 532.3M864.5 543.3L867.5 540.3M870.5 537.3L873.5 534.3M870.5 545.3L873.5 542.3M875.5 452.3L878.5 449.3M875.5 460.3L878.5 457.3M875.5 468.3L878.5 465.3M875.5 476.3L878.5 473.3M875.5 484.3L878.5 481.3M875.5 492.3L878.5 489.3M875.5 500.3L878.5 497.3M875.5 508.3L878.5 505.3M875.5 516.3L878.5 513.3M875.5 524.3L878.5 521.3M875.5 532.3L878.5 529.3M875.5 540.3L878.5 537.3M877.8 546L878.5 545.3M881.5 518.3L884.5 515.3M881.5 526.3L884.5 523.3M881.5 534.3L884.5 531.3M881.5 542.3L884.5 539.3M887.5 472.3L890.5 469.3M887.5 480.3L890.5 477.3M887.5 488.3L890.5 485.3M887.5 496.3L890.5 493.3M887.5 504.3L890.5 501.3M887.5 512.3L890.5 509.3M887.5 520.3L890.5 517.3M887.5 528.3L890.5 525.3M887.5 536.3L890.5 533.3M887.5 544.3L890.5 541.3M892.5 443.3L895.5 440.3M892.5 451.3L895.5 448.3M892.5 459.3L895.5 456.3M892.5 467.3L895.5 464.3M892.5 475.3L895.5 472.3M892.5 483.3L895.5 480.3M892.5 491.3L895.5 488.3M892.5 499.3L895.5 496.3M892.5 507.3L895.5 504.3M892.5 515.3L895.5 512.3M892.5 523.3L895.5 520.3M892.5 531.3L895.5 528.3M892.5 539.3L895.5 536.3M893.8 546L895.5 544.3M898.5 437.3L901.5 434.3M898.5 445.3L901.5 442.3M898.5 453.3L901.5 450.3M898.5 461.3L901.5 458.3M898.5 469.3L901.5 466.3M898.5 477.3L901.5 474.3M898.5 485.3L901.5 482.3M898.5 493.3L901.5 490.3M898.5 501.3L901.5 498.3M898.5 509.3L901.5 506.3M898.5 517.3L901.5 514.3M898.5 525.3L901.5 522.3M898.5 533.3L901.5 530.3M898.5 541.3L901.5 538.3M904.5 415.3L907.5 412.3M904.5 423.3L907.5 420.3M904.5 431.3L907.5 428.3M904.5 439.3L907.5 436.3M904.5 447.3L907.5 444.3M904.5 455.3L907.5 452.3M904.5 463.3L907.5 460.3M904.5 471.3L907.5 468.3M904.5 479.3L907.5 476.3M904.5 487.3L907.5 484.3M904.5 495.3L907.5 492.3M904.5 503.3L907.5 500.3M904.5 511.3L907.5 508.3M904.5 519.3L907.5 516.3M904.5 527.3L907.5 524.3M904.5 535.3L907.5 532.3M904.5 543.3L907.5 540.3M909.5 378.3L912.5 375.3M909.5 386.3L912.5 383.3M909.5 394.3L912.5 391.3M909.5 402.3L912.5 399.3M909.5 410.3L912.5 407.3M909.5 418.3L912.5 415.3M909.5 426.3L912.5 423.3M909.5 434.3L912.5 431.3M909.5 442.3L912.5 439.3M909.5 450.3L912.5 447.3M909.5 458.3L912.5 455.3M909.5 466.3L912.5 463.3M909.5 474.3L912.5 471.3M909.5 482.3L912.5 479.3M909.5 490.3L912.5 487.3M909.5 498.3L912.5 495.3M909.5 506.3L912.5 503.3M909.5 514.3L912.5 511.3M909.5 522.3L912.5 519.3M909.5 530.3L912.5 527.3M909.5 538.3L912.5 535.3M909.8 546L912.5 543.3M914.5 389.3L916.8 387M914.5 397.3L917.5 394.3M914.5 405.3L917.5 402.3M914.5 413.3L917.5 410.3M914.5 421.3L917.5 418.3M914.5 429.3L917.5 426.3M914.5 437.3L917.5 434.3M914.5 445.3L917.5 442.3M914.5 453.3L917.5 450.3M914.5 461.3L917.5 458.3M914.5 469.3L917.5 466.3M914.5 477.3L917.5 474.3M914.5 485.3L917.5 482.3M914.5 493.3L917.5 490.3M914.5 501.3L917.5 498.3M914.5 509.3L917.5 506.3M914.5 517.3L917.5 514.3M914.5 525.3L917.5 522.3M914.5 533.3L917.5 530.3M914.5 541.3L917.5 538.3M920.5 431.3L923.5 428.3M920.5 439.3L923.5 436.3M920.5 447.3L923.5 444.3M920.5 455.3L923.5 452.3M920.5 463.3L923.5 460.3M920.5 471.3L923.5 468.3M920.5 479.3L923.5 476.3M920.5 487.3L923.5 484.3M920.5 495.3L923.5 492.3M920.5 503.3L923.5 500.3M920.5 511.3L923.5 508.3M920.5 519.3L923.5 516.3M920.5 527.3L923.5 524.3M920.5 535.3L923.5 532.3M920.5 543.3L923.5 540.3M926.5 369.3L929.5 366.3M926.5 377.3L929.5 374.3M926.5 385.3L929.5 382.3M926.5 393.3L929.5 390.3M926.5 401.3L929.5 398.3M926.5 409.3L929.5 406.3M926.5 417.3L929.5 414.3M926.5 425.3L929.5 422.3M926.5 433.3L929.5 430.3M926.5 441.3L929.5 438.3M926.5 449.3L929.5 446.3M926.5 457.3L929.5 454.3M926.5 465.3L929.5 462.3M926.5 473.3L929.5 470.3M926.5 481.3L929.5 478.3M926.5 489.3L929.5 486.3M926.5 497.3L929.5 494.3M926.5 505.3L929.5 502.3M926.5 513.3L929.5 510.3M926.5 521.3L929.5 518.3M926.5 529.3L929.5 526.3M926.5 537.3L929.5 534.3M926.5 545.3L929.5 542.3M931.5 428.3L934.5 425.3M931.5 436.3L934.5 433.3M931.5 444.3L934.5 441.3M931.5 452.3L934.5 449.3M931.5 460.3L934.5 457.3M931.5 468.3L934.5 465.3M931.5 476.3L934.5 473.3M931.5 484.3L934.5 481.3M931.5 492.3L934.5 489.3M931.5 500.3L934.5 497.3M931.5 508.3L934.5 505.3M931.5 516.3L934.5 513.3M931.5 524.3L934.5 521.3M931.5 532.3L934.5 529.3M931.5 540.3L934.5 537.3M933.8 546L934.5 545.3M937.5 470.3L940.5 467.3M937.5 478.3L940.5 475.3M937.5 486.3L940.5 483.3M937.5 494.3L940.5 491.3M937.5 502.3L940.5 499.3M937.5 510.3L940.5 507.3M937.5 518.3L940.5 515.3M937.5 526.3L940.5 523.3M937.5 534.3L940.5 531.3M937.5 542.3L940.5 539.3M943.5 392.3L946.5 389.3M943.5 400.3L946.5 397.3M943.5 408.3L946.5 405.3M943.5 416.3L946.5 413.3M943.5 424.3L946.5 421.3M943.5 432.3L946.5 429.3M943.5 440.3L946.5 437.3M943.5 448.3L946.5 445.3M943.5 456.3L946.5 453.3M943.5 464.3L946.5 461.3M943.5 472.3L946.5 469.3M943.5 480.3L946.5 477.3M943.5 488.3L946.5 485.3M943.5 496.3L946.5 493.3M943.5 504.3L946.5 501.3M943.5 512.3L946.5 509.3M943.5 520.3L946.5 517.3M943.5 528.3L946.5 525.3M943.5 536.3L946.5 533.3M943.5 544.3L946.5 541.3M948.5 467.3L951.5 464.3M948.5 475.3L951.5 472.3M948.5 483.3L951.5 480.3M948.5 491.3L951.5 488.3M948.5 499.3L951.5 496.3M948.5 507.3L951.5 504.3M948.5 515.3L951.5 512.3M948.5 523.3L951.5 520.3M948.5 531.3L951.5 528.3M948.5 539.3L951.5 536.3M949.8 546L951.5 544.3M954.5 501.3L957.5 498.3M954.5 509.3L957.5 506.3M954.5 517.3L957.5 514.3M954.5 525.3L957.5 522.3M954.5 533.3L957.5 530.3M954.5 541.3L957.5 538.3M960.5 503.3L963.5 500.3M960.5 511.3L963.5 508.3M960.5 519.3L963.5 516.3M960.5 527.3L963.5 524.3M960.5 535.3L963.5 532.3M960.5 543.3L963.5 540.3M965.5 530.3L968.5 527.3M965.5 538.3L968.5 535.3M965.8 546L968.5 543.3M971.5 540.3L974.5 537.3M973.8 546L974.5 545.3M976.5 415.3L978.8 413M976.5 423.3L979.5 420.3M976.5 431.3L979.5 428.3M976.5 439.3L979.5 436.3M976.5 447.3L979.5 444.3M976.5 455.3L979.5 452.3M976.5 463.3L979.5 460.3M976.5 471.3L979.5 468.3M976.5 479.3L979.5 476.3M976.5 487.3L979.5 484.3M976.5 495.3L979.5 492.3M976.5 503.3L979.5 500.3M976.5 511.3L979.5 508.3M976.5 519.3L979.5 516.3M976.5 527.3L979.5 524.3M976.5 535.3L979.5 532.3M976.5 543.3L979.5 540.3M982.5 529.3L984.8 527M982.5 537.3L985.5 534.3M982.5 545.3L985.5 542.3M987.5 452.3L990.5 449.3M987.5 460.3L990.5 457.3M987.5 468.3L990.5 465.3M987.5 476.3L990.5 473.3M987.5 484.3L990.5 481.3M987.5 492.3L990.5 489.3M987.5 500.3L990.5 497.3M987.5 508.3L990.5 505.3M987.5 516.3L990.5 513.3M987.5 524.3L990.5 521.3M987.5 532.3L990.5 529.3M987.5 540.3L990.5 537.3M989.8 546L990.5 545.3M993.5 510.3L996.5 507.3M993.5 518.3L996.5 515.3M993.5 526.3L996.5 523.3M993.5 534.3L996.5 531.3M993.5 542.3L996.5 539.3M999.5 512.3L1002.5 509.3M999.5 520.3L1002.5 517.3M999.5 528.3L1002.5 525.3M999.5 536.3L1002.5 533.3M999.5 544.3L1002.5 541.3M1004.5 515.3L1007.5 512.3M1004.5 523.3L1007.5 520.3M1004.5 531.3L1007.5 528.3M1004.5 539.3L1007.5 536.3M1005.8 546L1007.5 544.3M1010.5 501.3L1012.8 499M1010.5 509.3L1013.5 506.3M1010.5 517.3L1013.5 514.3M1010.5 525.3L1013.5 522.3M1010.5 533.3L1013.5 530.3M1010.5 541.3L1013.5 538.3M1016.5 479.3L1019.5 476.3M1016.5 487.3L1019.5 484.3M1016.5 495.3L1019.5 492.3M1016.5 503.3L1019.5 500.3M1016.5 511.3L1019.5 508.3M1016.5 519.3L1019.5 516.3M1016.5 527.3L1019.5 524.3M1016.5 535.3L1019.5 532.3M1016.5 543.3L1019.5 540.3M1021.8 546L1022.8 545M1027.5 532.3L1030.5 529.3M1027.5 540.3L1030.5 537.3M1029.8 546L1030.5 545.3M1033.5 534.3L1036.5 531.3M1033.5 542.3L1036.5 539.3M1038.5 513.3L1041.5 510.3M1038.5 521.3L1041.5 518.3M1038.5 529.3L1041.5 526.3M1038.5 537.3L1041.5 534.3M1038.5 545.3L1041.5 542.3M1044.5 523.3L1046.8 521M1044.5 531.3L1047.5 528.3M1044.5 539.3L1047.5 536.3M1045.8 546L1047.5 544.3M1049.5 486.3L1052.5 483.3M1049.5 494.3L1052.5 491.3M1049.5 502.3L1052.5 499.3M1049.5 510.3L1052.5 507.3M1049.5 518.3L1052.5 515.3M1049.5 526.3L1052.5 523.3M1049.5 534.3L1052.5 531.3M1049.5 542.3L1052.5 539.3M1055.5 496.3L1058.5 493.3M1055.5 504.3L1058.5 501.3M1055.5 512.3L1058.5 509.3M1055.5 520.3L1058.5 517.3M1055.5 528.3L1058.5 525.3M1055.5 536.3L1058.5 533.3M1055.5 544.3L1058.5 541.3M1061.5 506.3L1064.5 503.3M1061.5 514.3L1064.5 511.3M1061.5 522.3L1064.5 519.3M1061.5 530.3L1064.5 527.3M1061.5 538.3L1064.5 535.3M1061.8 546L1064.5 543.3M1066.5 461.3L1069.5 458.3M1066.5 469.3L1069.5 466.3M1066.5 477.3L1069.5 474.3M1066.5 485.3L1069.5 482.3M1066.5 493.3L1069.5 490.3M1066.5 501.3L1069.5 498.3M1066.5 509.3L1069.5 506.3M1066.5 517.3L1069.5 514.3M1066.5 525.3L1069.5 522.3M1066.5 533.3L1069.5 530.3M1066.5 541.3L1069.5 538.3M1072.5 463.3L1073.8 462M1072.5 471.3L1075.5 468.3M1072.5 479.3L1075.5 476.3M1072.5 487.3L1075.5 484.3M1072.5 495.3L1075.5 492.3M1072.5 503.3L1075.5 500.3M1072.5 511.3L1075.5 508.3M1072.5 519.3L1075.5 516.3M1072.5 527.3L1075.5 524.3M1072.5 535.3L1075.5 532.3M1072.5 543.3L1075.5 540.3M1078.5 521.3L1081.5 518.3M1078.5 529.3L1081.5 526.3M1078.5 537.3L1081.5 534.3M1078.5 545.3L1081.5 542.3M1083.5 492.3L1085.8 490M1083.5 500.3L1086.5 497.3M1083.5 508.3L1086.5 505.3M1083.5 516.3L1086.5 513.3M1083.5 524.3L1086.5 521.3M1083.5 532.3L1086.5 529.3M1083.5 540.3L1086.5 537.3M1085.8 546L1086.5 545.3M1089.5 462.3L1090.8 461M1089.5 470.3L1092.5 467.3M1089.5 478.3L1092.5 475.3M1089.5 486.3L1092.5 483.3M1089.5 494.3L1092.5 491.3M1089.5 502.3L1092.5 499.3M1089.5 510.3L1092.5 507.3M1089.5 518.3L1092.5 515.3M1089.5 526.3L1092.5 523.3M1089.5 534.3L1092.5 531.3M1089.5 542.3L1092.5 539.3M1094.5 521.3L1096.8 519M1094.5 529.3L1097.5 526.3M1094.5 537.3L1097.5 534.3M1094.5 545.3L1097.5 542.3M1100.5 507.3L1101.8 506M1100.5 515.3L1103.5 512.3M1100.5 523.3L1103.5 520.3M1100.5 531.3L1103.5 528.3M1100.5 539.3L1103.5 536.3M1101.8 546L1103.5 544.3M1106.5 461.3L1109.5 458.3M1106.5 469.3L1109.5 466.3M1106.5 477.3L1109.5 474.3M1106.5 485.3L1109.5 482.3M1106.5 493.3L1109.5 490.3M1106.5 501.3L1109.5 498.3M1106.5 509.3L1109.5 506.3M1106.5 517.3L1109.5 514.3M1106.5 525.3L1109.5 522.3M1106.5 533.3L1109.5 530.3M1106.5 541.3L1109.5 538.3M1111.5 288.3L1113.8 286M1111.5 296.3L1114.5 293.3M1111.5 304.3L1114.5 301.3M1111.5 312.3L1114.5 309.3M1111.5 320.3L1114.5 317.3M1111.5 328.3L1114.5 325.3M1111.5 336.3L1114.5 333.3M1111.5 344.3L1114.5 341.3M1111.5 352.3L1114.5 349.3M1111.5 360.3L1114.5 357.3M1111.5 368.3L1114.5 365.3M1111.5 376.3L1114.5 373.3M1111.5 384.3L1114.5 381.3M1111.5 392.3L1114.5 389.3M1111.5 400.3L1114.5 397.3M1111.5 408.3L1114.5 405.3M1111.5 416.3L1114.5 413.3M1111.5 424.3L1114.5 421.3M1111.5 432.3L1114.5 429.3M1111.5 440.3L1114.5 437.3M1111.5 448.3L1114.5 445.3M1111.5 456.3L1114.5 453.3M1111.5 464.3L1114.5 461.3M1111.5 472.3L1114.5 469.3M1111.5 480.3L1114.5 477.3M1111.5 488.3L1114.5 485.3M1111.5 496.3L1114.5 493.3M1111.5 504.3L1114.5 501.3M1111.5 512.3L1114.5 509.3M1111.5 520.3L1114.5 517.3M1111.5 528.3L1114.5 525.3M1111.5 536.3L1114.5 533.3M1111.5 544.3L1114.5 541.3M1117.5 58.3L1120.5 55.3M1117.5 66.3L1120.5 63.3M1117.5 74.3L1120.5 71.3M1117.5 82.3L1120.5 79.3M1117.5 90.3L1120.5 87.3M1117.5 98.3L1120.5 95.3M1117.5 106.3L1120.5 103.3M1117.5 114.3L1120.5 111.3M1117.5 122.3L1120.5 119.3M1117.5 130.3L1120.5 127.3M1117.5 138.3L1120.5 135.3M1117.5 146.3L1120.5 143.3M1117.5 154.3L1120.5 151.3M1117.5 162.3L1120.5 159.3M1117.5 170.3L1120.5 167.3M1117.5 178.3L1120.5 175.3M1117.5 186.3L1120.5 183.3M1117.5 194.3L1120.5 191.3M1117.5 202.3L1120.5 199.3M1117.5 210.3L1120.5 207.3M1117.5 218.3L1120.5 215.3M1117.5 226.3L1120.5 223.3M1117.5 234.3L1120.5 231.3M1117.5 242.3L1120.5 239.3M1117.5 250.3L1120.5 247.3M1117.5 258.3L1120.5 255.3M1117.5 266.3L1120.5 263.3M1117.5 274.3L1120.5 271.3M1117.5 282.3L1120.5 279.3M1117.5 290.3L1120.5 287.3M1117.5 298.3L1120.5 295.3M1117.5 306.3L1120.5 303.3M1117.5 314.3L1120.5 311.3M1117.5 322.3L1120.5 319.3M1117.5 330.3L1120.5 327.3M1117.5 338.3L1120.5 335.3M1117.5 346.3L1120.5 343.3M1117.5 354.3L1120.5 351.3M1117.5 362.3L1120.5 359.3M1117.5 370.3L1120.5 367.3M1117.5 378.3L1120.5 375.3M1117.5 386.3L1120.5 383.3M1117.5 394.3L1120.5 391.3M1117.5 402.3L1120.5 399.3M1117.5 410.3L1120.5 407.3M1117.5 418.3L1120.5 415.3M1117.5 426.3L1120.5 423.3M1117.5 434.3L1120.5 431.3M1117.5 442.3L1120.5 439.3M1117.5 450.3L1120.5 447.3M1117.5 458.3L1120.5 455.3M1117.5 466.3L1120.5 463.3M1117.5 474.3L1120.5 471.3M1117.5 482.3L1120.5 479.3M1117.5 490.3L1120.5 487.3M1117.5 498.3L1120.5 495.3M1117.5 506.3L1120.5 503.3M1117.5 514.3L1120.5 511.3M1117.5 522.3L1120.5 519.3M1117.5 530.3L1120.5 527.3M1117.5 538.3L1120.5 535.3M1117.8 546L1120.5 543.3" stroke="#228B22" stroke-width="1.15" stroke-linecap="round" fill="none"/>
<path d="M89.5 550.3L92.5 547.3M89.5 558.3L92.5 555.3M89.5 566.3L92.5 563.3M89.5 574.3L92.5 571.3M89.5 582.3L92.5 579.3M89.8 590L92.5 587.3M95.5 552.3L98.5 549.3M95.5 560.3L98.5 557.3M95.5 568.3L98.5 565.3M106.5 549.3L108.8 547M106.5 557.3L109.5 554.3M106.5 565.3L109.5 562.3M111.5 552.3L114.5 549.3M111.5 560.3L114.5 557.3M111.5 568.3L114.5 565.3M111.5 576.3L114.5 573.3M111.5 584.3L114.5 581.3M111.5 592.3L114.5 589.3M111.5 600.3L114.5 597.3M111.5 608.3L114.5 605.3M111.5 616.3L114.5 613.3M111.5 624.3L114.5 621.3M111.5 632.3L114.5 629.3M111.5 640.3L114.5 637.3M111.5 648.3L114.5 645.3M111.5 656.3L114.5 653.3M111.5 664.3L114.5 661.3M117.5 554.3L120.5 551.3M117.5 562.3L120.5 559.3M117.5 570.3L120.5 567.3M117.5 578.3L120.5 575.3M117.5 586.3L120.5 583.3M117.5 594.3L120.5 591.3M117.5 602.3L120.5 599.3M117.5 610.3L120.5 607.3M117.5 618.3L120.5 615.3M117.5 626.3L120.5 623.3M117.8 634L120.5 631.3M122.5 549.3L124.8 547M122.5 557.3L125.5 554.3M122.5 565.3L125.5 562.3M122.5 573.3L125.5 570.3M122.5 581.3L125.5 578.3M128.5 551.3L131.5 548.3M128.5 559.3L131.5 556.3M128.5 567.3L131.5 564.3M128.5 575.3L131.5 572.3M128.5 583.3L131.5 580.3M128.5 591.3L131.5 588.3M128.5 599.3L131.5 596.3M129.8 606L131.5 604.3M134.5 553.3L137.5 550.3M134.5 561.3L137.5 558.3M134.5 569.3L137.5 566.3M139.5 548.3L140.8 547M139.5 556.3L142.5 553.3M139.5 564.3L142.5 561.3M145.5 550.3L148.5 547.3M151.5 552.3L154.5 549.3M156.5 555.3L159.5 552.3M162.5 549.3L164.8 547M162.5 557.3L165.5 554.3M162.5 565.3L165.5 562.3M162.5 573.3L165.5 570.3M162.5 581.3L165.5 578.3M162.8 589L165.5 586.3M167.5 552.3L170.5 549.3M167.5 560.3L170.5 557.3M167.5 568.3L170.5 565.3M167.5 576.3L170.5 573.3M167.5 584.3L170.5 581.3M167.5 592.3L170.5 589.3M167.5 600.3L170.5 597.3M167.5 608.3L170.5 605.3M167.5 616.3L170.5 613.3M167.5 624.3L170.5 621.3M167.5 632.3L170.5 629.3M167.5 640.3L170.5 637.3M173.5 554.3L176.5 551.3M178.5 549.3L180.8 547M178.5 557.3L181.5 554.3M178.5 565.3L181.5 562.3M178.5 573.3L181.5 570.3M178.5 581.3L181.5 578.3M178.5 589.3L181.5 586.3M178.5 597.3L181.5 594.3M178.5 605.3L181.5 602.3M178.5 613.3L181.5 610.3M184.5 551.3L187.5 548.3M184.5 559.3L187.5 556.3M184.5 567.3L187.5 564.3M184.5 575.3L187.5 572.3M184.5 583.3L187.5 580.3M186.8 589L187.5 588.3M190.5 553.3L193.5 550.3M190.5 561.3L193.5 558.3M190.5 569.3L193.5 566.3M190.5 577.3L193.5 574.3M190.5 585.3L193.5 582.3M190.5 593.3L193.5 590.3M190.5 601.3L193.5 598.3M190.5 609.3L193.5 606.3M190.5 617.3L193.5 614.3M190.5 625.3L193.5 622.3M190.8 633L193.5 630.3M195.5 548.3L196.8 547M195.5 556.3L198.5 553.3M195.5 564.3L198.5 561.3M195.5 572.3L198.5 569.3M195.5 580.3L198.5 577.3M195.5 588.3L198.5 585.3M195.5 596.3L198.5 593.3M195.5 604.3L198.5 601.3M195.5 612.3L198.5 609.3M195.5 620.3L198.5 617.3M195.5 628.3L198.5 625.3M195.5 636.3L198.5 633.3M195.5 644.3L198.5 641.3M195.5 652.3L198.5 649.3M195.5 660.3L198.5 657.3M195.5 668.3L198.5 665.3M195.5 676.3L198.5 673.3M195.5 684.3L198.5 681.3M195.5 692.3L198.5 689.3M195.5 700.3L198.5 697.3M195.5 708.3L198.5 705.3M195.5 716.3L198.5 713.3M195.5 724.3L198.5 721.3M195.5 732.3L198.5 729.3M195.5 740.3L198.5 737.3M195.5 748.3L198.5 745.3M195.5 756.3L198.5 753.3M195.5 764.3L198.5 761.3M195.5 772.3L198.5 769.3M195.5 780.3L198.5 777.3M195.5 788.3L198.5 785.3M195.5 796.3L198.5 793.3M197.8 802L198.5 801.3M201.5 550.3L204.5 547.3M201.5 558.3L204.5 555.3M201.5 566.3L204.5 563.3M201.5 574.3L204.5 571.3M201.5 582.3L204.5 579.3M201.5 590.3L204.5 587.3M201.5 598.3L204.5 595.3M201.5 606.3L204.5 603.3M201.5 614.3L204.5 611.3M201.5 622.3L204.5 619.3M207.5 552.3L210.5 549.3M207.5 560.3L210.5 557.3M207.5 568.3L210.5 565.3M207.5 576.3L210.5 573.3M207.5 584.3L210.5 581.3M207.5 592.3L210.5 589.3M207.5 600.3L210.5 597.3M207.5 608.3L210.5 605.3M207.5 616.3L210.5 613.3M207.5 624.3L210.5 621.3M207.5 632.3L210.5 629.3M209.8 638L210.5 637.3M212.5 555.3L215.5 552.3M212.5 563.3L215.5 560.3M212.5 571.3L215.5 568.3M212.5 579.3L215.5 576.3M212.5 587.3L215.5 584.3M212.5 595.3L215.5 592.3M212.5 603.3L215.5 600.3M212.5 611.3L215.5 608.3M212.5 619.3L215.5 616.3M212.5 627.3L215.5 624.3M212.5 635.3L215.5 632.3M212.5 643.3L215.5 640.3M212.5 651.3L215.5 648.3M212.5 659.3L215.5 656.3M212.5 667.3L215.5 664.3M212.5 675.3L215.5 672.3M212.5 683.3L215.5 680.3M212.5 691.3L215.5 688.3M212.5 699.3L215.5 696.3M212.5 707.3L215.5 704.3M218.5 549.3L220.8 547M218.5 557.3L221.5 554.3M218.5 565.3L221.5 562.3M218.5 573.3L221.5 570.3M218.5 581.3L221.5 578.3M218.5 589.3L221.5 586.3M218.5 597.3L221.5 594.3M218.5 605.3L221.5 602.3M219.8 612L221.5 610.3M235.5 548.3L236.8 547M235.5 556.3L238.5 553.3M235.5 564.3L238.5 561.3M235.5 572.3L238.5 569.3M235.5 580.3L238.5 577.3M235.5 588.3L238.5 585.3M240.5 551.3L243.5 548.3M240.5 559.3L243.5 556.3M240.5 567.3L243.5 564.3M240.5 575.3L243.5 572.3M240.5 583.3L243.5 580.3M240.5 591.3L243.5 588.3M240.5 599.3L243.5 596.3M240.5 607.3L243.5 604.3M246.5 553.3L249.5 550.3M246.5 561.3L249.5 558.3M246.5 569.3L249.5 566.3M246.5 577.3L249.5 574.3M246.5 585.3L249.5 582.3M246.5 593.3L249.5 590.3M248.8 599L249.5 598.3M252.5 555.3L255.5 552.3M252.5 563.3L255.5 560.3M252.5 571.3L255.5 568.3M252.8 579L255.5 576.3M257.5 550.3L260.5 547.3M257.5 558.3L260.5 555.3M257.8 566L260.5 563.3M263.5 552.3L266.5 549.3M263.5 560.3L266.5 557.3M264.8 567L266.5 565.3M269.5 554.3L272.5 551.3M269.5 562.3L272.5 559.3M274.5 549.3L276.8 547M274.5 557.3L277.5 554.3M274.5 565.3L277.5 562.3M274.5 573.3L277.5 570.3M274.5 581.3L277.5 578.3M274.5 589.3L277.5 586.3M280.5 551.3L283.5 548.3M280.5 559.3L283.5 556.3M281.8 566L283.5 564.3M286.5 553.3L289.5 550.3M286.5 561.3L289.5 558.3M286.8 569L289.5 566.3M291.5 548.3L292.8 547M291.5 556.3L294.5 553.3M297.5 550.3L300.5 547.3M297.5 558.3L300.5 555.3M298.8 565L300.5 563.3M302.5 553.3L305.5 550.3M302.5 561.3L305.5 558.3M308.5 555.3L311.5 552.3M308.5 563.3L311.5 560.3M308.5 571.3L311.5 568.3M309.8 578L311.5 576.3M313.5 550.3L316.5 547.3M315.8 556L316.5 555.3M319.5 552.3L322.5 549.3M319.5 560.3L322.5 557.3M319.5 568.3L322.5 565.3M319.5 576.3L322.5 573.3M319.5 584.3L322.5 581.3M319.5 592.3L322.5 589.3M319.5 600.3L322.5 597.3M319.5 608.3L322.5 605.3M319.5 616.3L322.5 613.3M319.5 624.3L322.5 621.3M319.5 632.3L322.5 629.3M319.5 640.3L322.5 637.3M319.5 648.3L322.5 645.3M325.5 554.3L328.5 551.3M325.5 562.3L328.5 559.3M325.5 570.3L328.5 567.3M330.5 549.3L332.8 547M330.5 557.3L333.5 554.3M330.5 565.3L333.5 562.3M330.5 573.3L333.5 570.3M330.5 581.3L333.5 578.3M330.8 589L333.5 586.3M336.5 551.3L339.5 548.3M353.5 550.3L356.5 547.3M353.5 558.3L356.5 555.3M353.5 566.3L356.5 563.3M353.5 574.3L356.5 571.3M353.5 582.3L356.5 579.3M353.5 590.3L356.5 587.3M353.5 598.3L356.5 595.3M354.8 605L356.5 603.3M359.5 552.3L362.5 549.3M359.5 560.3L362.5 557.3M359.5 568.3L362.5 565.3M359.5 576.3L362.5 573.3M359.5 584.3L362.5 581.3M361.8 590L362.5 589.3M364.5 555.3L367.5 552.3M364.5 563.3L367.5 560.3M364.8 571L367.5 568.3M369.5 550.3L372.5 547.3M369.5 558.3L372.5 555.3M369.5 566.3L372.5 563.3M369.5 574.3L372.5 571.3M369.5 582.3L372.5 579.3M369.5 590.3L372.5 587.3M369.5 598.3L372.5 595.3M375.5 552.3L378.5 549.3M375.5 560.3L378.5 557.3M375.5 568.3L378.5 565.3M375.5 576.3L378.5 573.3M375.5 584.3L378.5 581.3M375.5 592.3L378.5 589.3M375.5 600.3L378.5 597.3M375.5 608.3L378.5 605.3M375.5 616.3L378.5 613.3M381.5 554.3L384.5 551.3M386.5 549.3L388.8 547M386.5 557.3L389.5 554.3M392.5 551.3L395.5 548.3M392.5 559.3L395.5 556.3M392.5 567.3L395.5 564.3M392.8 575L395.5 572.3M398.5 553.3L401.5 550.3M398.5 561.3L401.5 558.3M398.8 569L401.5 566.3M403.5 548.3L404.8 547M403.5 556.3L406.5 553.3M403.5 564.3L406.5 561.3M403.5 572.3L406.5 569.3M403.5 580.3L406.5 577.3M403.5 588.3L406.5 585.3M409.5 550.3L412.5 547.3M409.5 558.3L412.5 555.3M409.5 566.3L412.5 563.3M409.5 574.3L412.5 571.3M409.5 582.3L412.5 579.3M409.5 590.3L412.5 587.3M409.5 598.3L412.5 595.3M409.5 606.3L412.5 603.3M409.5 614.3L412.5 611.3M409.5 622.3L412.5 619.3M409.5 630.3L412.5 627.3M409.5 638.3L412.5 635.3M409.5 646.3L412.5 643.3M409.5 654.3L412.5 651.3M410.8 661L412.5 659.3M415.5 552.3L418.5 549.3M417.8 558L418.5 557.3M420.5 555.3L423.5 552.3M420.5 563.3L423.5 560.3M420.5 571.3L423.5 568.3M420.5 579.3L423.5 576.3M420.5 587.3L423.5 584.3M420.5 595.3L423.5 592.3M420.5 603.3L423.5 600.3M420.5 611.3L423.5 608.3M420.5 619.3L423.5 616.3M426.5 549.3L428.8 547M426.5 557.3L429.5 554.3M426.5 565.3L429.5 562.3M426.5 573.3L429.5 570.3M426.5 581.3L429.5 578.3M426.5 589.3L429.5 586.3M426.5 597.3L429.5 594.3M426.5 605.3L429.5 602.3M426.5 613.3L429.5 610.3M426.5 621.3L429.5 618.3M427.8 628L429.5 626.3M432.5 551.3L435.5 548.3M432.5 559.3L435.5 556.3M432.5 567.3L435.5 564.3M432.5 575.3L435.5 572.3M432.5 583.3L435.5 580.3M433.8 590L435.5 588.3M437.5 554.3L440.5 551.3M437.5 562.3L440.5 559.3M437.5 570.3L440.5 567.3M437.5 578.3L440.5 575.3M437.5 586.3L440.5 583.3M437.5 594.3L440.5 591.3M443.5 548.3L444.8 547M443.5 556.3L446.5 553.3M443.5 564.3L446.5 561.3M443.5 572.3L446.5 569.3M443.5 580.3L446.5 577.3M443.5 588.3L446.5 585.3M443.5 596.3L446.5 593.3M443.5 604.3L446.5 601.3M443.5 612.3L446.5 609.3M443.5 620.3L446.5 617.3M448.5 551.3L451.5 548.3M448.5 559.3L451.5 556.3M448.5 567.3L451.5 564.3M448.5 575.3L451.5 572.3M448.5 583.3L451.5 580.3M448.5 591.3L451.5 588.3M448.5 599.3L451.5 596.3M448.5 607.3L451.5 604.3M448.5 615.3L451.5 612.3M450.8 621L451.5 620.3M454.5 553.3L457.5 550.3M454.5 561.3L457.5 558.3M454.5 569.3L457.5 566.3M454.5 577.3L457.5 574.3M454.5 585.3L457.5 582.3M454.5 593.3L457.5 590.3M454.5 601.3L457.5 598.3M454.5 609.3L457.5 606.3M454.5 617.3L457.5 614.3M454.5 625.3L457.5 622.3M454.5 633.3L457.5 630.3M454.5 641.3L457.5 638.3M454.5 649.3L457.5 646.3M454.5 657.3L457.5 654.3M454.5 665.3L457.5 662.3M454.5 673.3L457.5 670.3M454.5 681.3L457.5 678.3M454.5 689.3L457.5 686.3M454.5 697.3L457.5 694.3M454.5 705.3L457.5 702.3M454.5 713.3L457.5 710.3M459.5 548.3L460.8 547M459.5 556.3L462.5 553.3M459.5 564.3L462.5 561.3M459.5 572.3L462.5 569.3M459.5 580.3L462.5 577.3M459.5 588.3L462.5 585.3M459.5 596.3L462.5 593.3M460.8 603L462.5 601.3M465.5 550.3L468.5 547.3M465.5 558.3L468.5 555.3M465.5 566.3L468.5 563.3M465.5 574.3L468.5 571.3M465.5 582.3L468.5 579.3M465.5 590.3L468.5 587.3M465.5 598.3L468.5 595.3M465.5 606.3L468.5 603.3M465.5 614.3L468.5 611.3M465.5 622.3L468.5 619.3M465.5 630.3L468.5 627.3M465.5 638.3L468.5 635.3M465.5 646.3L468.5 643.3M465.5 654.3L468.5 651.3M465.5 662.3L468.5 659.3M465.5 670.3L468.5 667.3M465.5 678.3L468.5 675.3M465.5 686.3L468.5 683.3M465.5 694.3L468.5 691.3M465.5 702.3L468.5 699.3M465.5 710.3L468.5 707.3M465.5 718.3L468.5 715.3M465.5 726.3L468.5 723.3M465.5 734.3L468.5 731.3M465.5 742.3L468.5 739.3M465.5 750.3L468.5 747.3M465.5 758.3L468.5 755.3M471.5 552.3L474.5 549.3M471.5 560.3L474.5 557.3M471.5 568.3L474.5 565.3M471.5 576.3L474.5 573.3M471.5 584.3L474.5 581.3M471.5 592.3L474.5 589.3M471.5 600.3L474.5 597.3M471.5 608.3L474.5 605.3M471.5 616.3L474.5 613.3M471.5 624.3L474.5 621.3M471.5 632.3L474.5 629.3M471.5 640.3L474.5 637.3M471.5 648.3L474.5 645.3M476.5 555.3L479.5 552.3M476.5 563.3L479.5 560.3M476.5 571.3L479.5 568.3M476.5 579.3L479.5 576.3M476.5 587.3L479.5 584.3M476.5 595.3L479.5 592.3M482.5 549.3L484.8 547M482.5 557.3L485.5 554.3M482.5 565.3L485.5 562.3M482.5 573.3L485.5 570.3M488.5 551.3L491.5 548.3M488.5 559.3L491.5 556.3M488.5 567.3L491.5 564.3M488.5 575.3L491.5 572.3M488.5 583.3L491.5 580.3M488.5 591.3L491.5 588.3M488.5 599.3L491.5 596.3M488.5 607.3L491.5 604.3M488.5 615.3L491.5 612.3M488.5 623.3L491.5 620.3M488.5 631.3L491.5 628.3M488.5 639.3L491.5 636.3M488.5 647.3L491.5 644.3M493.5 554.3L496.5 551.3M493.5 562.3L496.5 559.3M493.5 570.3L496.5 567.3M493.5 578.3L496.5 575.3M493.5 586.3L496.5 583.3M493.5 594.3L496.5 591.3M493.5 602.3L496.5 599.3M493.5 610.3L496.5 607.3M493.5 618.3L496.5 615.3M493.5 626.3L496.5 623.3M493.5 634.3L496.5 631.3M493.5 642.3L496.5 639.3M493.5 650.3L496.5 647.3M499.5 548.3L500.8 547M499.5 556.3L502.5 553.3M499.5 564.3L502.5 561.3M499.5 572.3L502.5 569.3M499.5 580.3L502.5 577.3M499.5 588.3L502.5 585.3M499.5 596.3L502.5 593.3M499.5 604.3L502.5 601.3M499.5 612.3L502.5 609.3M499.5 620.3L502.5 617.3M499.5 628.3L502.5 625.3M499.5 636.3L502.5 633.3M499.5 644.3L502.5 641.3M499.5 652.3L502.5 649.3M504.5 551.3L507.5 548.3M504.5 559.3L507.5 556.3M504.5 567.3L507.5 564.3M504.5 575.3L507.5 572.3M504.5 583.3L507.5 580.3M504.5 591.3L507.5 588.3M504.5 599.3L507.5 596.3M505.8 606L507.5 604.3M510.5 553.3L513.5 550.3M510.5 561.3L513.5 558.3M510.5 569.3L513.5 566.3M510.5 577.3L513.5 574.3M510.5 585.3L513.5 582.3M516.5 555.3L519.5 552.3M516.5 563.3L519.5 560.3M516.5 571.3L519.5 568.3M516.5 579.3L519.5 576.3M516.5 587.3L519.5 584.3M516.5 595.3L519.5 592.3M516.5 603.3L519.5 600.3M516.5 611.3L519.5 608.3M516.5 619.3L519.5 616.3M518.8 625L519.5 624.3M521.5 550.3L524.5 547.3M521.5 558.3L524.5 555.3M521.5 566.3L524.5 563.3M521.5 574.3L524.5 571.3M521.5 582.3L524.5 579.3M521.5 590.3L524.5 587.3M521.5 598.3L524.5 595.3M521.5 606.3L524.5 603.3M521.5 614.3L524.5 611.3M521.5 622.3L524.5 619.3M521.5 630.3L524.5 627.3M521.5 638.3L524.5 635.3M521.5 646.3L524.5 643.3M521.5 654.3L524.5 651.3M521.5 662.3L524.5 659.3M521.5 670.3L524.5 667.3M521.5 678.3L524.5 675.3M521.5 686.3L524.5 683.3M521.5 694.3L524.5 691.3M521.5 702.3L524.5 699.3M521.5 710.3L524.5 707.3M521.5 718.3L524.5 715.3M521.5 726.3L524.5 723.3M521.5 734.3L524.5 731.3M521.5 742.3L524.5 739.3M521.5 750.3L524.5 747.3M521.5 758.3L524.5 755.3M521.5 766.3L524.5 763.3M521.5 774.3L524.5 771.3M521.5 782.3L524.5 779.3M521.5 790.3L524.5 787.3M521.5 798.3L524.5 795.3M527.5 552.3L530.5 549.3M527.5 560.3L530.5 557.3M527.5 568.3L530.5 565.3M527.5 576.3L530.5 573.3M527.5 584.3L530.5 581.3M528.8 591L530.5 589.3M533.5 554.3L536.5 551.3M533.5 562.3L536.5 559.3M538.5 549.3L540.8 547M538.5 557.3L541.5 554.3M538.5 565.3L541.5 562.3M538.5 573.3L541.5 570.3M544.5 551.3L547.5 548.3M544.5 559.3L547.5 556.3M544.5 567.3L547.5 564.3M544.5 575.3L547.5 572.3M544.5 583.3L547.5 580.3M544.5 591.3L547.5 588.3M546.8 597L547.5 596.3M550.5 553.3L553.5 550.3M550.5 561.3L553.5 558.3M550.5 569.3L553.5 566.3M550.5 577.3L553.5 574.3M550.5 585.3L553.5 582.3M550.5 593.3L553.5 590.3M550.5 601.3L553.5 598.3M552.8 607L553.5 606.3M555.5 548.3L556.8 547M555.5 556.3L558.5 553.3M555.5 564.3L558.5 561.3M555.5 572.3L558.5 569.3M555.5 580.3L558.5 577.3M561.5 550.3L564.5 547.3M561.5 558.3L564.5 555.3M567.5 552.3L570.5 549.3M567.5 560.3L570.5 557.3M567.5 568.3L570.5 565.3M567.5 576.3L570.5 573.3M572.5 555.3L575.5 552.3M577.5 550.3L580.5 547.3M577.5 558.3L580.5 555.3M577.5 566.3L580.5 563.3M577.5 574.3L580.5 571.3M577.5 582.3L580.5 579.3M577.5 590.3L580.5 587.3M579.8 596L580.5 595.3M583.5 552.3L586.5 549.3M583.5 560.3L586.5 557.3M583.5 568.3L586.5 565.3M583.5 576.3L586.5 573.3M584.8 583L586.5 581.3M589.5 554.3L592.5 551.3M589.5 562.3L592.5 559.3M589.5 570.3L592.5 567.3M589.5 578.3L592.5 575.3M589.5 586.3L592.5 583.3M589.5 594.3L592.5 591.3M589.5 602.3L592.5 599.3M590.8 609L592.5 607.3M594.5 549.3L596.8 547M594.5 557.3L597.5 554.3M594.5 565.3L597.5 562.3M600.5 551.3L603.5 548.3M600.5 559.3L603.5 556.3M600.5 567.3L603.5 564.3M600.5 575.3L603.5 572.3M600.5 583.3L603.5 580.3M600.5 591.3L603.5 588.3M600.8 599L603.5 596.3M611.5 548.3L612.8 547M611.5 556.3L614.5 553.3M611.5 564.3L614.5 561.3M617.5 550.3L620.5 547.3M617.5 558.3L620.5 555.3M617.5 566.3L620.5 563.3M617.5 574.3L620.5 571.3M623.5 552.3L626.5 549.3M623.5 560.3L626.5 557.3M623.5 568.3L626.5 565.3M623.5 576.3L626.5 573.3M628.5 555.3L631.5 552.3M628.5 563.3L631.5 560.3M628.5 571.3L631.5 568.3M628.5 579.3L631.5 576.3M628.5 587.3L631.5 584.3M628.5 595.3L631.5 592.3M628.5 603.3L631.5 600.3M634.5 549.3L636.8 547M634.5 557.3L637.5 554.3M634.5 565.3L637.5 562.3M634.5 573.3L637.5 570.3M634.5 581.3L637.5 578.3M634.5 589.3L637.5 586.3M634.5 597.3L637.5 594.3M634.5 605.3L637.5 602.3M634.5 613.3L637.5 610.3M634.5 621.3L637.5 618.3M634.5 629.3L637.5 626.3M634.5 637.3L637.5 634.3M634.5 645.3L637.5 642.3M634.5 653.3L637.5 650.3M634.5 661.3L637.5 658.3M634.5 669.3L637.5 666.3M634.5 677.3L637.5 674.3M634.5 685.3L637.5 682.3M634.5 693.3L637.5 690.3M634.5 701.3L637.5 698.3M639.5 552.3L642.5 549.3M639.5 560.3L642.5 557.3M639.5 568.3L642.5 565.3M639.5 576.3L642.5 573.3M639.5 584.3L642.5 581.3M639.5 592.3L642.5 589.3M639.5 600.3L642.5 597.3M639.5 608.3L642.5 605.3M639.5 616.3L642.5 613.3M639.5 624.3L642.5 621.3M639.5 632.3L642.5 629.3M639.5 640.3L642.5 637.3M639.5 648.3L642.5 645.3M639.5 656.3L642.5 653.3M639.5 664.3L642.5 661.3M639.5 672.3L642.5 669.3M639.5 680.3L642.5 677.3M639.5 688.3L642.5 685.3M640.8 695L642.5 693.3M645.5 554.3L648.5 551.3M645.5 562.3L648.5 559.3M645.5 570.3L648.5 567.3M645.5 578.3L648.5 575.3M650.5 549.3L652.8 547M650.5 557.3L653.5 554.3M650.5 565.3L653.5 562.3M650.5 573.3L653.5 570.3M650.5 581.3L653.5 578.3M650.5 589.3L653.5 586.3M650.5 597.3L653.5 594.3M650.5 605.3L653.5 602.3M650.8 613L653.5 610.3M656.5 551.3L659.5 548.3M656.5 559.3L659.5 556.3M656.5 567.3L659.5 564.3M656.5 575.3L659.5 572.3M656.5 583.3L659.5 580.3M656.5 591.3L659.5 588.3M656.5 599.3L659.5 596.3M656.5 607.3L659.5 604.3M656.5 615.3L659.5 612.3M656.5 623.3L659.5 620.3M656.5 631.3L659.5 628.3M656.5 639.3L659.5 636.3M656.5 647.3L659.5 644.3M662.5 553.3L665.5 550.3M662.5 561.3L665.5 558.3M662.5 569.3L665.5 566.3M667.5 548.3L668.8 547M667.5 556.3L670.5 553.3M667.5 564.3L670.5 561.3M667.5 572.3L670.5 569.3M667.5 580.3L670.5 577.3M667.5 588.3L670.5 585.3M673.5 550.3L676.5 547.3M673.5 558.3L676.5 555.3M673.5 566.3L676.5 563.3M673.5 574.3L676.5 571.3M673.5 582.3L676.5 579.3M679.5 552.3L682.5 549.3M679.5 560.3L682.5 557.3M679.5 568.3L682.5 565.3M679.5 576.3L682.5 573.3M679.5 584.3L682.5 581.3M679.5 592.3L682.5 589.3M679.5 600.3L682.5 597.3M679.5 608.3L682.5 605.3M679.5 616.3L682.5 613.3M679.5 624.3L682.5 621.3M679.5 632.3L682.5 629.3M679.5 640.3L682.5 637.3M679.5 648.3L682.5 645.3M679.5 656.3L682.5 653.3M680.8 663L682.5 661.3M684.5 555.3L687.5 552.3M684.5 563.3L687.5 560.3M684.5 571.3L687.5 568.3M684.5 579.3L687.5 576.3M684.5 587.3L687.5 584.3M684.8 595L687.5 592.3M690.5 549.3L692.8 547M690.5 557.3L693.5 554.3M690.5 565.3L693.5 562.3M690.5 573.3L693.5 570.3M690.5 581.3L693.5 578.3M690.5 589.3L693.5 586.3M690.5 597.3L693.5 594.3M690.5 605.3L693.5 602.3M690.5 613.3L693.5 610.3M690.5 621.3L693.5 618.3M690.5 629.3L693.5 626.3M690.5 637.3L693.5 634.3M690.5 645.3L693.5 642.3M690.5 653.3L693.5 650.3M690.5 661.3L693.5 658.3M690.5 669.3L693.5 666.3M690.5 677.3L693.5 674.3M696.5 551.3L699.5 548.3M696.5 559.3L699.5 556.3M696.5 567.3L699.5 564.3M706.5 549.3L708.8 547M706.5 557.3L709.5 554.3M706.5 565.3L709.5 562.3M706.5 573.3L709.5 570.3M708.8 579L709.5 578.3M712.5 551.3L715.5 548.3M718.5 553.3L721.5 550.3M718.5 561.3L721.5 558.3M718.5 569.3L721.5 566.3M718.5 577.3L721.5 574.3M718.5 585.3L721.5 582.3M718.5 593.3L721.5 590.3M723.5 548.3L724.8 547M723.5 556.3L726.5 553.3M723.5 564.3L726.5 561.3M723.5 572.3L726.5 569.3M723.5 580.3L726.5 577.3M729.5 550.3L732.5 547.3M729.5 558.3L732.5 555.3M729.5 566.3L732.5 563.3M729.5 574.3L732.5 571.3M729.5 582.3L732.5 579.3M729.5 590.3L732.5 587.3M729.5 598.3L732.5 595.3M729.5 606.3L732.5 603.3M735.5 552.3L738.5 549.3M735.5 560.3L738.5 557.3M735.5 568.3L738.5 565.3M735.5 576.3L738.5 573.3M735.5 584.3L738.5 581.3M735.5 592.3L738.5 589.3M735.5 600.3L738.5 597.3M735.5 608.3L738.5 605.3M735.5 616.3L738.5 613.3M735.5 624.3L738.5 621.3M735.5 632.3L738.5 629.3M735.5 640.3L738.5 637.3M735.8 648L738.5 645.3M746.5 549.3L748.8 547M746.5 557.3L749.5 554.3M746.5 565.3L749.5 562.3M746.5 573.3L749.5 570.3M746.5 581.3L749.5 578.3M752.5 551.3L755.5 548.3M752.5 559.3L755.5 556.3M752.5 567.3L755.5 564.3M754.8 573L755.5 572.3M757.5 554.3L760.5 551.3M757.5 562.3L760.5 559.3M757.5 570.3L760.5 567.3M763.5 548.3L764.8 547M763.5 556.3L766.5 553.3M763.5 564.3L766.5 561.3M763.5 572.3L766.5 569.3M764.8 579L766.5 577.3M769.5 550.3L772.5 547.3M769.5 558.3L772.5 555.3M769.5 566.3L772.5 563.3M769.5 574.3L772.5 571.3M769.5 582.3L772.5 579.3M769.5 590.3L772.5 587.3M769.5 598.3L772.5 595.3M769.5 606.3L772.5 603.3M769.5 614.3L772.5 611.3M769.5 622.3L772.5 619.3M769.5 630.3L772.5 627.3M769.5 638.3L772.5 635.3M769.5 646.3L772.5 643.3M769.5 654.3L772.5 651.3M769.5 662.3L772.5 659.3M769.5 670.3L772.5 667.3M769.5 678.3L772.5 675.3M769.5 686.3L772.5 683.3M769.5 694.3L772.5 691.3M770.8 701L772.5 699.3M774.5 553.3L777.5 550.3M774.5 561.3L777.5 558.3M774.5 569.3L777.5 566.3M774.5 577.3L777.5 574.3M774.5 585.3L777.5 582.3M774.5 593.3L777.5 590.3M774.5 601.3L777.5 598.3M774.5 609.3L777.5 606.3M774.5 617.3L777.5 614.3M774.5 625.3L777.5 622.3M780.5 555.3L783.5 552.3M780.5 563.3L783.5 560.3M780.5 571.3L783.5 568.3M780.5 579.3L783.5 576.3M780.5 587.3L783.5 584.3M780.5 595.3L783.5 592.3M780.5 603.3L783.5 600.3M780.5 611.3L783.5 608.3M780.5 619.3L783.5 616.3M780.5 627.3L783.5 624.3M780.5 635.3L783.5 632.3M780.5 643.3L783.5 640.3M780.5 651.3L783.5 648.3M780.5 659.3L783.5 656.3M780.5 667.3L783.5 664.3M782.8 673L783.5 672.3M785.5 550.3L788.5 547.3M785.5 558.3L788.5 555.3M785.5 566.3L788.5 563.3M785.5 574.3L788.5 571.3M785.5 582.3L788.5 579.3M785.5 590.3L788.5 587.3M785.5 598.3L788.5 595.3M785.5 606.3L788.5 603.3M785.8 614L788.5 611.3M791.5 552.3L794.5 549.3M791.5 560.3L794.5 557.3M791.5 568.3L794.5 565.3M791.5 576.3L794.5 573.3M791.5 584.3L794.5 581.3M791.5 592.3L794.5 589.3M791.5 600.3L794.5 597.3M791.5 608.3L794.5 605.3M791.5 616.3L794.5 613.3M791.5 624.3L794.5 621.3M791.5 632.3L794.5 629.3M791.8 640L794.5 637.3M797.5 554.3L800.5 551.3M797.5 562.3L800.5 559.3M797.5 570.3L800.5 567.3M797.5 578.3L800.5 575.3M802.5 549.3L804.8 547M802.5 557.3L805.5 554.3M802.5 565.3L805.5 562.3M802.5 573.3L805.5 570.3M808.5 551.3L811.5 548.3M808.5 559.3L811.5 556.3M808.5 567.3L811.5 564.3M808.5 575.3L811.5 572.3M808.5 583.3L811.5 580.3M808.5 591.3L811.5 588.3M814.5 553.3L817.5 550.3M814.5 561.3L817.5 558.3M814.5 569.3L817.5 566.3M814.5 577.3L817.5 574.3M814.5 585.3L817.5 582.3M814.5 593.3L817.5 590.3M814.5 601.3L817.5 598.3M814.5 609.3L817.5 606.3M814.5 617.3L817.5 614.3M814.5 625.3L817.5 622.3M814.5 633.3L817.5 630.3M814.5 641.3L817.5 638.3M814.5 649.3L817.5 646.3M814.5 657.3L817.5 654.3M814.5 665.3L817.5 662.3M814.5 673.3L817.5 670.3M814.5 681.3L817.5 678.3M814.5 689.3L817.5 686.3M815.8 696L817.5 694.3M819.5 548.3L820.8 547M825.5 550.3L828.5 547.3M825.5 558.3L828.5 555.3M825.5 566.3L828.5 563.3M825.5 574.3L828.5 571.3M825.5 582.3L828.5 579.3M825.5 590.3L828.5 587.3M831.5 552.3L834.5 549.3M831.5 560.3L834.5 557.3M831.5 568.3L834.5 565.3M831.5 576.3L834.5 573.3M831.5 584.3L834.5 581.3M831.5 592.3L834.5 589.3M831.5 600.3L834.5 597.3M831.5 608.3L834.5 605.3M831.5 616.3L834.5 613.3M836.5 555.3L839.5 552.3M836.5 563.3L839.5 560.3M841.5 550.3L844.5 547.3M841.5 558.3L844.5 555.3M841.5 566.3L844.5 563.3M841.5 574.3L844.5 571.3M841.5 582.3L844.5 579.3M841.5 590.3L844.5 587.3M847.5 552.3L850.5 549.3M847.5 560.3L850.5 557.3M853.5 554.3L856.5 551.3M853.5 562.3L856.5 559.3M853.5 570.3L856.5 567.3M853.5 578.3L856.5 575.3M853.5 586.3L856.5 583.3M855.8 592L856.5 591.3M858.5 549.3L860.8 547M858.5 557.3L861.5 554.3M864.5 551.3L867.5 548.3M864.5 559.3L867.5 556.3M864.5 567.3L867.5 564.3M864.5 575.3L867.5 572.3M866.8 581L867.5 580.3M870.5 553.3L873.5 550.3M870.5 561.3L873.5 558.3M870.5 569.3L873.5 566.3M875.5 548.3L876.8 547M875.5 556.3L878.5 553.3M875.5 564.3L878.5 561.3M875.5 572.3L878.5 569.3M875.5 580.3L878.5 577.3M875.5 588.3L878.5 585.3M875.5 596.3L878.5 593.3M875.5 604.3L878.5 601.3M875.5 612.3L878.5 609.3M875.5 620.3L878.5 617.3M875.5 628.3L878.5 625.3M875.5 636.3L878.5 633.3M875.5 644.3L878.5 641.3M875.5 652.3L878.5 649.3M876.8 659L878.5 657.3M881.5 550.3L884.5 547.3M881.5 558.3L884.5 555.3M881.5 566.3L884.5 563.3M881.5 574.3L884.5 571.3M881.5 582.3L884.5 579.3M881.5 590.3L884.5 587.3M881.5 598.3L884.5 595.3M881.5 606.3L884.5 603.3M881.5 614.3L884.5 611.3M882.8 621L884.5 619.3M887.5 552.3L890.5 549.3M887.5 560.3L890.5 557.3M887.5 568.3L890.5 565.3M889.8 574L890.5 573.3M892.5 555.3L895.5 552.3M892.5 563.3L895.5 560.3M892.5 571.3L895.5 568.3M893.8 578L895.5 576.3M898.5 549.3L900.8 547M898.5 557.3L901.5 554.3M898.5 565.3L901.5 562.3M898.5 573.3L901.5 570.3M898.5 581.3L901.5 578.3M898.5 589.3L901.5 586.3M898.5 597.3L901.5 594.3M900.8 603L901.5 602.3M904.5 551.3L907.5 548.3M904.5 559.3L907.5 556.3M904.5 567.3L907.5 564.3M904.5 575.3L907.5 572.3M904.5 583.3L907.5 580.3M904.5 591.3L907.5 588.3M904.5 599.3L907.5 596.3M904.5 607.3L907.5 604.3M904.5 615.3L907.5 612.3M904.5 623.3L907.5 620.3M904.5 631.3L907.5 628.3M904.5 639.3L907.5 636.3M904.5 647.3L907.5 644.3M904.5 655.3L907.5 652.3M904.5 663.3L907.5 660.3M904.5 671.3L907.5 668.3M904.5 679.3L907.5 676.3M904.5 687.3L907.5 684.3M904.8 695L907.5 692.3M909.5 554.3L912.5 551.3M909.5 562.3L912.5 559.3M909.5 570.3L912.5 567.3M909.5 578.3L912.5 575.3M909.5 586.3L912.5 583.3M909.5 594.3L912.5 591.3M909.5 602.3L912.5 599.3M909.5 610.3L912.5 607.3M909.5 618.3L912.5 615.3M909.5 626.3L912.5 623.3M909.5 634.3L912.5 631.3M909.5 642.3L912.5 639.3M909.5 650.3L912.5 647.3M914.5 549.3L916.8 547M914.5 557.3L917.5 554.3M914.5 565.3L917.5 562.3M914.5 573.3L917.5 570.3M914.5 581.3L917.5 578.3M914.5 589.3L917.5 586.3M914.5 597.3L917.5 594.3M914.5 605.3L917.5 602.3M914.5 613.3L917.5 610.3M914.5 621.3L917.5 618.3M914.5 629.3L917.5 626.3M914.5 637.3L917.5 634.3M920.5 551.3L923.5 548.3M920.5 559.3L923.5 556.3M920.5 567.3L923.5 564.3M920.5 575.3L923.5 572.3M920.5 583.3L923.5 580.3M920.5 591.3L923.5 588.3M920.5 599.3L923.5 596.3M920.5 607.3L923.5 604.3M920.5 615.3L923.5 612.3M920.5 623.3L923.5 620.3M920.5 631.3L923.5 628.3M920.5 639.3L923.5 636.3M920.5 647.3L923.5 644.3M920.5 655.3L923.5 652.3M922.8 661L923.5 660.3M926.5 553.3L929.5 550.3M926.5 561.3L929.5 558.3M926.5 569.3L929.5 566.3M926.5 577.3L929.5 574.3M926.5 585.3L929.5 582.3M926.5 593.3L929.5 590.3M926.5 601.3L929.5 598.3M926.5 609.3L929.5 606.3M926.5 617.3L929.5 614.3M926.5 625.3L929.5 622.3M926.5 633.3L929.5 630.3M926.5 641.3L929.5 638.3M926.5 649.3L929.5 646.3M926.5 657.3L929.5 654.3M926.5 665.3L929.5 662.3M926.5 673.3L929.5 670.3M926.5 681.3L929.5 678.3M926.5 689.3L929.5 686.3M926.5 697.3L929.5 694.3M926.5 705.3L929.5 702.3M926.5 713.3L929.5 710.3M926.5 721.3L929.5 718.3M926.5 729.3L929.5 726.3M931.5 548.3L932.8 547M931.5 556.3L934.5 553.3M931.5 564.3L934.5 561.3M931.5 572.3L934.5 569.3M931.5 580.3L934.5 577.3M931.5 588.3L934.5 585.3M931.5 596.3L934.5 593.3M931.5 604.3L934.5 601.3M931.5 612.3L934.5 609.3M931.5 620.3L934.5 617.3M931.5 628.3L934.5 625.3M931.5 636.3L934.5 633.3M931.5 644.3L934.5 641.3M931.5 652.3L934.5 649.3M932.8 659L934.5 657.3M937.5 550.3L940.5 547.3M937.5 558.3L940.5 555.3M937.5 566.3L940.5 563.3M937.5 574.3L940.5 571.3M937.5 582.3L940.5 579.3M937.5 590.3L940.5 587.3M937.5 598.3L940.5 595.3M937.5 606.3L940.5 603.3M937.5 614.3L940.5 611.3M943.5 552.3L946.5 549.3M943.5 560.3L946.5 557.3M943.5 568.3L946.5 565.3M943.5 576.3L946.5 573.3M943.5 584.3L946.5 581.3M943.5 592.3L946.5 589.3M943.5 600.3L946.5 597.3M943.5 608.3L946.5 605.3M943.5 616.3L946.5 613.3M943.5 624.3L946.5 621.3M943.5 632.3L946.5 629.3M943.5 640.3L946.5 637.3M943.5 648.3L946.5 645.3M943.5 656.3L946.5 653.3M943.5 664.3L946.5 661.3M943.5 672.3L946.5 669.3M943.5 680.3L946.5 677.3M948.5 555.3L951.5 552.3M948.5 563.3L951.5 560.3M948.5 571.3L951.5 568.3M948.5 579.3L951.5 576.3M948.5 587.3L951.5 584.3M948.5 595.3L951.5 592.3M948.5 603.3L951.5 600.3M948.5 611.3L951.5 608.3M948.5 619.3L951.5 616.3M948.5 627.3L951.5 624.3M954.5 549.3L956.8 547M954.5 557.3L957.5 554.3M954.5 565.3L957.5 562.3M954.5 573.3L957.5 570.3M954.5 581.3L957.5 578.3M954.5 589.3L957.5 586.3M954.5 597.3L957.5 594.3M954.5 605.3L957.5 602.3M954.5 613.3L957.5 610.3M954.5 621.3L957.5 618.3M954.5 629.3L957.5 626.3M960.5 551.3L963.5 548.3M960.5 559.3L963.5 556.3M960.5 567.3L963.5 564.3M960.5 575.3L963.5 572.3M960.5 583.3L963.5 580.3M960.5 591.3L963.5 588.3M960.5 599.3L963.5 596.3M960.5 607.3L963.5 604.3M960.5 615.3L963.5 612.3M960.5 623.3L963.5 620.3M960.5 631.3L963.5 628.3M962.8 637L963.5 636.3M965.5 554.3L968.5 551.3M965.5 562.3L968.5 559.3M965.5 570.3L968.5 567.3M965.5 578.3L968.5 575.3M965.5 586.3L968.5 583.3M966.8 593L968.5 591.3M971.5 548.3L972.8 547M971.5 556.3L974.5 553.3M976.5 551.3L979.5 548.3M976.5 559.3L979.5 556.3M976.5 567.3L979.5 564.3M976.5 575.3L979.5 572.3M976.5 583.3L979.5 580.3M976.5 591.3L979.5 588.3M976.5 599.3L979.5 596.3M976.5 607.3L979.5 604.3M976.5 615.3L979.5 612.3M976.5 623.3L979.5 620.3M976.5 631.3L979.5 628.3M978.8 637L979.5 636.3M982.5 553.3L985.5 550.3M982.5 561.3L985.5 558.3M982.5 569.3L985.5 566.3M987.5 548.3L988.8 547M987.5 556.3L990.5 553.3M987.5 564.3L990.5 561.3M987.5 572.3L990.5 569.3M987.5 580.3L990.5 577.3M987.5 588.3L990.5 585.3M987.5 596.3L990.5 593.3M987.5 604.3L990.5 601.3M988.8 611L990.5 609.3M993.5 550.3L996.5 547.3M993.5 558.3L996.5 555.3M994.8 565L996.5 563.3M999.5 552.3L1002.5 549.3M999.5 560.3L1002.5 557.3M999.5 568.3L1002.5 565.3M999.5 576.3L1002.5 573.3M999.5 584.3L1002.5 581.3M999.5 592.3L1002.5 589.3M1000.8 599L1002.5 597.3M1004.5 555.3L1007.5 552.3M1004.5 563.3L1007.5 560.3M1004.5 571.3L1007.5 568.3M1004.5 579.3L1007.5 576.3M1004.5 587.3L1007.5 584.3M1004.5 595.3L1007.5 592.3M1004.5 603.3L1007.5 600.3M1004.5 611.3L1007.5 608.3M1004.5 619.3L1007.5 616.3M1010.5 549.3L1012.8 547M1010.5 557.3L1013.5 554.3M1010.5 565.3L1013.5 562.3M1010.5 573.3L1013.5 570.3M1010.5 581.3L1013.5 578.3M1010.5 589.3L1013.5 586.3M1010.5 597.3L1013.5 594.3M1010.8 605L1013.5 602.3M1016.5 551.3L1019.5 548.3M1016.5 559.3L1019.5 556.3M1016.5 567.3L1019.5 564.3M1016.5 575.3L1019.5 572.3M1016.5 583.3L1019.5 580.3M1016.5 591.3L1019.5 588.3M1016.5 599.3L1019.5 596.3M1016.5 607.3L1019.5 604.3M1016.5 615.3L1019.5 612.3M1016.5 623.3L1019.5 620.3M1017.8 630L1019.5 628.3M1021.5 554.3L1024.5 551.3M1027.5 548.3L1028.8 547M1028.8 555L1030.5 553.3M1033.5 550.3L1036.5 547.3M1033.5 558.3L1036.5 555.3M1033.5 566.3L1036.5 563.3M1033.5 574.3L1036.5 571.3M1033.5 582.3L1036.5 579.3M1033.5 590.3L1036.5 587.3M1033.5 598.3L1036.5 595.3M1033.5 606.3L1036.5 603.3M1034.8 613L1036.5 611.3M1038.5 553.3L1041.5 550.3M1038.5 561.3L1041.5 558.3M1038.5 569.3L1041.5 566.3M1044.5 555.3L1047.5 552.3M1044.5 563.3L1047.5 560.3M1046.8 569L1047.5 568.3M1049.5 550.3L1052.5 547.3M1049.5 558.3L1052.5 555.3M1049.5 566.3L1052.5 563.3M1049.5 574.3L1052.5 571.3M1049.5 582.3L1052.5 579.3M1049.5 590.3L1052.5 587.3M1049.5 598.3L1052.5 595.3M1049.5 606.3L1052.5 603.3M1049.5 614.3L1052.5 611.3M1049.5 622.3L1052.5 619.3M1049.5 630.3L1052.5 627.3M1049.5 638.3L1052.5 635.3M1049.5 646.3L1052.5 643.3M1049.5 654.3L1052.5 651.3M1049.5 662.3L1052.5 659.3M1049.5 670.3L1052.5 667.3M1049.5 678.3L1052.5 675.3M1049.5 686.3L1052.5 683.3M1049.5 694.3L1052.5 691.3M1055.5 552.3L1058.5 549.3M1055.5 560.3L1058.5 557.3M1055.5 568.3L1058.5 565.3M1055.5 576.3L1058.5 573.3M1055.5 584.3L1058.5 581.3M1061.5 554.3L1064.5 551.3M1061.5 562.3L1064.5 559.3M1061.5 570.3L1064.5 567.3M1066.5 549.3L1068.8 547M1066.5 557.3L1069.5 554.3M1066.5 565.3L1069.5 562.3M1066.5 573.3L1069.5 570.3M1072.5 551.3L1075.5 548.3M1072.5 559.3L1075.5 556.3M1072.5 567.3L1075.5 564.3M1072.5 575.3L1075.5 572.3M1072.5 583.3L1075.5 580.3M1078.5 553.3L1081.5 550.3M1078.5 561.3L1081.5 558.3M1078.5 569.3L1081.5 566.3M1078.5 577.3L1081.5 574.3M1083.5 548.3L1084.8 547M1083.5 556.3L1086.5 553.3M1083.5 564.3L1086.5 561.3M1083.5 572.3L1086.5 569.3M1083.5 580.3L1086.5 577.3M1083.5 588.3L1086.5 585.3M1083.5 596.3L1086.5 593.3M1083.5 604.3L1086.5 601.3M1083.5 612.3L1086.5 609.3M1083.5 620.3L1086.5 617.3M1083.5 628.3L1086.5 625.3M1085.8 634L1086.5 633.3M1089.5 550.3L1092.5 547.3M1089.5 558.3L1092.5 555.3M1089.5 566.3L1092.5 563.3M1089.5 574.3L1092.5 571.3M1090.8 581L1092.5 579.3M1094.5 553.3L1097.5 550.3M1094.5 561.3L1097.5 558.3M1094.5 569.3L1097.5 566.3M1094.5 577.3L1097.5 574.3M1094.5 585.3L1097.5 582.3M1094.5 593.3L1097.5 590.3M1094.5 601.3L1097.5 598.3M1094.5 609.3L1097.5 606.3M1094.5 617.3L1097.5 614.3M1094.5 625.3L1097.5 622.3M1094.5 633.3L1097.5 630.3M1094.5 641.3L1097.5 638.3M1094.5 649.3L1097.5 646.3M1094.5 657.3L1097.5 654.3M1100.5 555.3L1103.5 552.3M1100.5 563.3L1103.5 560.3M1100.5 571.3L1103.5 568.3M1100.5 579.3L1103.5 576.3M1100.5 587.3L1103.5 584.3M1100.5 595.3L1103.5 592.3M1100.5 603.3L1103.5 600.3M1106.5 549.3L1108.8 547M1106.5 557.3L1109.5 554.3M1106.5 565.3L1109.5 562.3M1106.5 573.3L1109.5 570.3M1106.5 581.3L1109.5 578.3M1106.5 589.3L1109.5 586.3M1106.5 597.3L1109.5 594.3M1106.5 605.3L1109.5 602.3M1106.5 613.3L1109.5 610.3M1106.5 621.3L1109.5 618.3M1111.5 552.3L1114.5 549.3M1111.5 560.3L1114.5 557.3M1111.5 568.3L1114.5 565.3M1111.5 576.3L1114.5 573.3M1111.5 584.3L1114.5 581.3M1111.5 592.3L1114.5 589.3M1111.5 600.3L1114.5 597.3M1111.5 608.3L1114.5 605.3M1111.5 616.3L1114.5 613.3M1111.5 624.3L1114.5 621.3M1111.5 632.3L1114.5 629.3M1111.5 640.3L1114.5 637.3M1111.5 648.3L1114.5 645.3M1111.5 656.3L1114.5 653.3M1111.8 664L1114.5 661.3M1117.5 554.3L1120.5 551.3M1117.5 562.3L1120.5 559.3M1117.5 570.3L1120.5 567.3M1117.5 578.3L1120.5 575.3M1117.5 586.3L1120.5 583.3M1117.5 594.3L1120.5 591.3M1117.5 602.3L1120.5 599.3M1117.5 610.3L1120.5 607.3M1117.5 618.3L1120.5 615.3M1119.8 624L1120.5 623.3" stroke="#FF0000" stroke-width="1.15" stroke-linecap="round" fill="none"/>
<path d="M89.3 508.5H92.5V546M95.3 515.5H98.5V546M100.3 532.5H103.5V546M106.3 499.5H109.5V546M111.3 454.5H114.5V546M117.3 489.5H120.5V546M122.3 494.5H125.5V546M128.3 513.5H131.5V546M134.3 505.5H137.5V546M139.3 510.5H142.5V546M145.3 488.5H148.5V546M151.3 521.5H154.5V546M156.3 516.5H159.5V546M162.3 529.5H165.5V546M167.3 442.5H170.5V546M173.3 517.5H176.5V546M178.3 507.5H181.5V546M184.3 478.5H187.5V546M190.3 537.5H193.5V546M195.3 385.5H198.5V546M201.3 459.5H204.5V546M207.3 436.5H210.5V546M212.3 428.5H215.5V546M218.3 420.5H221.5V546M224.3 513.5H227.5V546M229.3 501.5H232.5V546M235.3 502.5H238.5V546M240.3 492.5H243.5V546M246.3 455.5H249.5V546M252.3 494.5H255.5V546M257.3 534.5H260.5V546M263.3 526.5H266.5V546M269.3 490.5H272.5V546M274.3 512.5H277.5V546M280.3 508.5H283.5V546M286.3 520.5H289.5V546M291.3 522.5H294.5V546M297.3 505.5H300.5V546M302.3 531.5H305.5V546M308.3 509.5H311.5V546M313.3 532.5H316.5V546M319.3 475.5H322.5V546M325.3 499.5H328.5V546M330.3 511.5H333.5V546M336.3 529.5H339.5V546M342.3 531.5H345.5V546M347.3 514.5H350.5V546M353.3 510.5H356.5V546M359.3 479.5H362.5V546M364.3 510.5H367.5V546M369.3 459.5H372.5V546M375.3 507.5H378.5V546M381.3 507.5H384.5V546M386.3 531.5H389.5V546M392.3 494.5H395.5V546M398.3 494.5H401.5V546M403.3 511.5H406.5V546M409.3 341.5H412.5V546M415.3 489.5H418.5V546M420.3 487.5H423.5V546M426.3 470.5H429.5V546M432.3 499.5H435.5V546M437.3 458.5H440.5V546M443.3 445.5H446.5V546M448.3 444.5H451.5V546M454.3 399.5H457.5V546M459.3 447.5H462.5V546M465.3 387.5H468.5V546M471.3 358.5H474.5V546M476.3 480.5H479.5V546M482.3 499.5H485.5V546M488.3 433.5H491.5V546M493.3 329.5H496.5V546M499.3 411.5H502.5V546M504.3 444.5H507.5V546M510.3 485.5H513.5V546M516.3 467.5H519.5V546M521.3 461.5H524.5V546M527.3 502.5H530.5V546M533.3 481.5H536.5V546M538.3 463.5H541.5V546M544.3 511.5H547.5V546M550.3 460.5H553.5V546M555.3 531.5H558.5V546M561.3 514.5H564.5V546M567.3 507.5H570.5V546M572.3 518.5H575.5V546M577.3 493.5H580.5V546M583.3 526.5H586.5V546M589.3 481.5H592.5V546M594.3 513.5H597.5V546M600.3 510.5H603.5V546M606.3 520.5H609.5V546M611.3 536.5H614.5V546M617.3 461.5H620.5V546M623.3 518.5H626.5V546M628.3 467.5H631.5V546M634.3 415.5H637.5V546M639.3 408.5H642.5V546M645.3 453.5H648.5V546M650.3 485.5H653.5V546M656.3 479.5H659.5V546M662.3 466.5H665.5V546M667.3 474.5H670.5V546M673.3 485.5H676.5V546M679.3 424.5H682.5V546M684.3 469.5H687.5V546M690.3 467.5H693.5V546M696.3 534.5H699.5V546M701.3 536.5H704.5V546M706.3 511.5H709.5V546M712.3 539.5H715.5V546M718.3 446.5H721.5V546M723.3 534.5H726.5V546M729.3 479.5H732.5V546M735.3 483.5H738.5V546M740.3 524.5H743.5V546M746.3 515.5H749.5V546M752.3 544.5H755.5V546M757.3 503.5H760.5V546M763.3 408.5H766.5V546M769.3 436.5H772.5V546M774.3 282.5H777.5V546M780.3 377.5H783.5V546M785.3 463.5H788.5V546M791.3 360.5H794.5V546M797.3 398.5H800.5V546M802.3 525.5H805.5V546M808.3 435.5H811.5V546M814.3 420.5H817.5V546M819.3 516.5H822.5V546M825.3 508.5H828.5V546M831.3 463.5H834.5V546M836.3 470.5H839.5V546M841.3 544.5H844.5V546M847.3 486.5H850.5V546M853.3 455.5H856.5V546M858.3 516.5H861.5V546M864.3 507.5H867.5V546M870.3 529.5H873.5V546M875.3 445.5H878.5V546M881.3 513.5H884.5V546M887.3 466.5H890.5V546M892.3 439.5H895.5V546M898.3 431.5H901.5V546M904.3 411.5H907.5V546M909.3 371.5H912.5V546M914.3 386.5H917.5V546M920.3 425.5H923.5V546M926.3 364.5H929.5V546M931.3 419.5H934.5V546M937.3 461.5H940.5V546M943.3 386.5H946.5V546M948.3 463.5H951.5V546M954.3 495.5H957.5V546M960.3 494.5H963.5V546M965.3 523.5H968.5V546M971.3 534.5H974.5V546M976.3 412.5H979.5V546M982.3 526.5H985.5V546M987.3 447.5H990.5V546M993.3 505.5H996.5V546M999.3 508.5H1002.5V546M1004.3 508.5H1007.5V546M1010.3 498.5H1013.5V546M1016.3 472.5H1019.5V546M1021.3 544.5H1024.5V546M1027.3 527.5H1030.5V546M1033.3 526.5H1036.5V546M1038.3 505.5H1041.5V546M1044.3 520.5H1047.5V546M1049.3 477.5H1052.5V546M1055.3 489.5H1058.5V546M1061.3 498.5H1064.5V546M1066.3 453.5H1069.5V546M1072.3 461.5H1075.5V546M1078.3 512.5H1081.5V546M1083.3 489.5H1086.5V546M1089.3 460.5H1092.5V546M1094.3 518.5H1097.5V546M1100.3 505.5H1103.5V546M1106.3 455.5H1109.5V546M1111.3 285.5H1114.5V546M1117.3 52.5H1120.5V546" stroke="#228B22" stroke-width="1" fill="none"/>
<path d="M89.3 590.5H92.5V547M95.3 570.5H98.5V547M100.3 548.5H103.5V547M106.3 569.5H109.5V547M111.3 665.5H114.5V547M117.3 634.5H120.5V547M122.3 585.5H125.5V547M128.3 606.5H131.5V547M134.3 574.5H137.5V547M139.3 566.5H142.5V547M145.3 554.5H148.5V547M151.3 554.5H154.5V547M156.3 560.5H159.5V547M162.3 589.5H165.5V547M167.3 643.5H170.5V547M173.3 555.5H176.5V547M178.3 615.5H181.5V547M184.3 589.5H187.5V547M190.3 633.5H193.5V547M195.3 802.5H198.5V547M201.3 627.5H204.5V547M207.3 638.5H210.5V547M212.3 710.5H215.5V547M218.3 612.5H221.5V547M224.3 548.5H227.5V547M229.3 551.5H232.5V547M235.3 593.5H238.5V547M240.3 610.5H243.5V547M246.3 599.5H249.5V547M252.3 579.5H255.5V547M257.3 566.5H260.5V547M263.3 567.5H266.5V547M269.3 565.5H272.5V547M274.3 590.5H277.5V547M280.3 566.5H283.5V547M286.3 569.5H289.5V547M291.3 559.5H294.5V547M297.3 565.5H300.5V547M302.3 566.5H305.5V547M308.3 578.5H311.5V547M313.3 556.5H316.5V547M319.3 652.5H322.5V547M325.3 575.5H328.5V547M330.3 589.5H333.5V547M336.3 552.5H339.5V547M342.3 549.5H345.5V547M347.3 547.5H350.5V547M353.3 605.5H356.5V547M359.3 590.5H362.5V547M364.3 571.5H367.5V547M369.3 603.5H372.5V547M375.3 617.5H378.5V547M381.3 556.5H384.5V547M386.3 560.5H389.5V547M392.3 575.5H395.5V547M398.3 569.5H401.5V547M403.3 589.5H406.5V547M409.3 661.5H412.5V547M415.3 558.5H418.5V547M420.3 621.5H423.5V547M426.3 628.5H429.5V547M432.3 590.5H435.5V547M437.3 599.5H440.5V547M443.3 624.5H446.5V547M448.3 621.5H451.5V547M454.3 718.5H457.5V547M459.3 603.5H462.5V547M465.3 762.5H468.5V547M471.3 649.5H474.5V547M476.3 599.5H479.5V547M482.3 575.5H485.5V547M488.3 651.5H491.5V547M493.3 651.5H496.5V547M499.3 653.5H502.5V547M504.3 606.5H507.5V547M510.3 587.5H513.5V547M516.3 625.5H519.5V547M521.3 802.5H524.5V547M527.3 591.5H530.5V547M533.3 564.5H536.5V547M538.3 577.5H541.5V547M544.3 597.5H547.5V547M550.3 607.5H553.5V547M555.3 584.5H558.5V547M561.3 559.5H564.5V547M567.3 579.5H570.5V547M572.3 560.5H575.5V547M577.3 596.5H580.5V547M583.3 583.5H586.5V547M589.3 609.5H592.5V547M594.3 567.5H597.5V547M600.3 599.5H603.5V547M606.3 548.5H609.5V547M611.3 565.5H614.5V547M617.3 576.5H620.5V547M623.3 579.5H626.5V547M628.3 605.5H631.5V547M634.3 705.5H637.5V547M639.3 695.5H642.5V547M645.3 580.5H648.5V547M650.3 613.5H653.5V547M656.3 648.5H659.5V547M662.3 572.5H665.5V547M667.3 592.5H670.5V547M673.3 586.5H676.5V547M679.3 663.5H682.5V547M684.3 595.5H687.5V547M690.3 681.5H693.5V547M696.3 570.5H699.5V547M701.3 551.5H704.5V547M706.3 579.5H709.5V547M712.3 553.5H715.5V547M718.3 594.5H721.5V547M723.3 583.5H726.5V547M729.3 609.5H732.5V547M735.3 648.5H738.5V547M740.3 548.5H743.5V547M746.3 583.5H749.5V547M752.3 573.5H755.5V547M757.3 575.5H760.5V547M763.3 579.5H766.5V547M769.3 701.5H772.5V547M774.3 627.5H777.5V547M780.3 673.5H783.5V547M785.3 614.5H788.5V547M791.3 640.5H794.5V547M797.3 580.5H800.5V547M802.3 575.5H805.5V547M808.3 595.5H811.5V547M814.3 696.5H817.5V547M819.3 551.5H822.5V547M825.3 595.5H828.5V547M831.3 621.5H834.5V547M836.3 568.5H839.5V547M841.3 591.5H844.5V547M847.3 561.5H850.5V547M853.3 592.5H856.5V547M858.3 562.5H861.5V547M864.3 581.5H867.5V547M870.3 573.5H873.5V547M875.3 659.5H878.5V547M881.3 621.5H884.5V547M887.3 574.5H890.5V547M892.3 578.5H895.5V547M898.3 603.5H901.5V547M904.3 695.5H907.5V547M909.3 651.5H912.5V547M914.3 638.5H917.5V547M920.3 661.5H923.5V547M926.3 730.5H929.5V547M931.3 659.5H934.5V547M937.3 618.5H940.5V547M943.3 685.5H946.5V547M948.3 628.5H951.5V547M954.3 630.5H957.5V547M960.3 637.5H963.5V547M965.3 593.5H968.5V547M971.3 557.5H974.5V547M976.3 637.5H979.5V547M982.3 571.5H985.5V547M987.3 611.5H990.5V547M993.3 565.5H996.5V547M999.3 599.5H1002.5V547M1004.3 624.5H1007.5V547M1010.3 605.5H1013.5V547M1016.3 630.5H1019.5V547M1021.3 555.5H1024.5V547M1027.3 555.5H1030.5V547M1033.3 613.5H1036.5V547M1038.3 570.5H1041.5V547M1044.3 569.5H1047.5V547M1049.3 698.5H1052.5V547M1055.3 589.5H1058.5V547M1061.3 575.5H1064.5V547M1066.3 575.5H1069.5V547M1072.3 588.5H1075.5V547M1078.3 582.5H1081.5V547M1083.3 634.5H1086.5V547M1089.3 581.5H1092.5V547M1094.3 658.5H1097.5V547M1100.3 608.5H1103.5V547M1106.3 623.5H1109.5V547M1111.3 664.5H1114.5V547M1117.3 624.5H1120.5V547" stroke="#FF0000" stroke-width="1" fill="none"/>
<path d="M100 546H104V541H100ZM106 546H110V517H106ZM122 546H126V529H122ZM134 546H138V534H134ZM139 546H143V537H139ZM145 546H149V507H145ZM151 546H155V535H151ZM156 546H160V532H156ZM167 546H171V531H167ZM173 546H177V530H173ZM184 546H188V510H184ZM201 546H205V502H201ZM207 546H211V517H207ZM218 546H222V488H218ZM224 546H228V524H224ZM229 546H233V513H229ZM235 546H239V539H235ZM240 546H244V533H240ZM246 546H250V514H246ZM252 546H256V518H252ZM263 546H267V534H263ZM269 546H273V513H269ZM280 546H284V523H280ZM286 546H290V545H286ZM291 546H295V540H291ZM297 546H301V522H297ZM308 546H312V527H308ZM319 546H323V532H319ZM325 546H329V524H325ZM336 546H340V536H336ZM342 546H346V538H342ZM347 546H351V520H347ZM353 546H357V539H353ZM359 546H363V508H359ZM364 546H368V536H364ZM369 546H373V508H369ZM375 546H379V536H375ZM381 546H385V525H381ZM386 546H390V537H386ZM392 546H396V533H392ZM398 546H402V519H398ZM409 546H413V433H409ZM415 546H419V507H415ZM426 546H430V529H426ZM432 546H436V528H432ZM437 546H441V507H437ZM443 546H447V529H443ZM448 546H452V531H448ZM459 546H463V485H459ZM471 546H475V418H471ZM476 546H480V515H476ZM482 546H486V535H482ZM488 546H492V489H488ZM493 546H497V392H493ZM499 546H503V489H499ZM504 546H508V491H504ZM510 546H514V522H510ZM527 546H531V542H527ZM533 546H537V499H533ZM538 546H542V494H538ZM550 546H554V530H550ZM561 546H565V536H561ZM567 546H571V546H567ZM572 546H576V532H572ZM589 546H593V537H589ZM594 546H598V539H594ZM606 546H610V525H606ZM617 546H621V500H617ZM628 546H632V526H628ZM639 546H643V520H639ZM645 546H649V484H645ZM662 546H666V490H662ZM667 546H671V527H667ZM679 546H683V500H679ZM684 546H688V507H684ZM696 546H700V543H696ZM712 546H716V545H712ZM718 546H722V503H718ZM729 546H733V503H729ZM740 546H744V535H740ZM757 546H761V543H757ZM763 546H767V456H763ZM774 546H778V353H774ZM780 546H784V472H780ZM785 546H789V490H785ZM791 546H795V484H791ZM797 546H801V433H797ZM808 546H812V481H808ZM819 546H823V532H819ZM836 546H840V489H836ZM847 546H851V515H847ZM853 546H857V502H853ZM858 546H862V534H858ZM864 546H868V535H864ZM875 546H879V544H875ZM887 546H891V495H887ZM892 546H896V461H892ZM898 546H902V479H898ZM904 546H908V500H904ZM914 546H918V481H914ZM920 546H924V517H920ZM926 546H930V543H926ZM931 546H935V508H931ZM937 546H941V538H937ZM943 546H947V509H943ZM948 546H952V535H948ZM971 546H975V544H971ZM976 546H980V475H976ZM987 546H991V532H987ZM993 546H997V539H993ZM1010 546H1014V538H1010ZM1021 546H1025V544H1021ZM1027 546H1031V543H1027ZM1038 546H1042V534H1038ZM1044 546H1048V534H1044ZM1055 546H1059V524H1055ZM1061 546H1065V517H1061ZM1066 546H1070V508H1066ZM1072 546H1076V497H1072ZM1089 546H1093V499H1089ZM1100 546H1104V537H1100ZM1106 546H1110V520H1106ZM1111 546H1115V422H1111ZM1117 546H1121V152H1117Z" fill="#228B22"/>
<path d="M89 547H93V554H89ZM95 547H99V547H95ZM111 547H115V569H111ZM117 547H121V551H117ZM128 547H132V572H128ZM162 547H166V555H162ZM178 547H182V549H178ZM190 547H194V612H190ZM195 547H199V635H195ZM212 547H216V595H212ZM257 547H261V547H257ZM274 547H278V549H274ZM302 547H306V551H302ZM313 547H317V550H313ZM330 547H334V549H330ZM403 547H407V553H403ZM420 547H424V555H420ZM454 547H458V575H454ZM465 547H469V586H465ZM516 547H520V574H516ZM521 547H525V730H521ZM544 547H548V560H544ZM555 547H559V569H555ZM577 547H581V547H577ZM583 547H587V550H583ZM600 547H604V558H600ZM611 547H615V547H611ZM623 547H627V559H623ZM634 547H638V552H634ZM650 547H654V550H650ZM656 547H660V583H656ZM673 547H677V552H673ZM690 547H694V555H690ZM701 547H705V551H701ZM706 547H710V549H706ZM723 547H727V553H723ZM735 547H739V556H735ZM746 547H750V556H746ZM752 547H756V572H752ZM769 547H773V611H769ZM802 547H806V558H802ZM814 547H818V568H814ZM825 547H829V557H825ZM831 547H835V547H831ZM841 547H845V592H841ZM870 547H874V553H870ZM881 547H885V589H881ZM909 547H913V589H909ZM954 547H958V578H954ZM960 547H964V585H960ZM965 547H969V559H965ZM982 547H986V553H982ZM999 547H1003V558H999ZM1004 547H1008V576H1004ZM1016 547H1020V571H1016ZM1033 547H1037V602H1033ZM1049 547H1053V641H1049ZM1078 547H1082V551H1078ZM1083 547H1087V561H1083ZM1094 547H1098V649H1094Z" fill="#FF0000"/>
<path d="M86.2 50.5V805.2M85.5 804.8H1122M85.5 546.7H1122M81 775.5H86M81 729.5H86M81 683.5H86M81 638.5H86M81 592.5H86M81 546.5H86M81 500.5H86M81 455.5H86M81 409.5H86M81 363.5H86M81 317.5H86M81 272.5H86M81 226.5H86M81 180.5H86M81 134.5H86M81 89.5H86M90.5 805V810M157.5 805V810M225.5 805V810M292.5 805V810M360.5 805V810M427.5 805V810M494.5 805V810M562.5 805V810M629.5 805V810M696.5 805V810M764.5 805V810M831.5 805V810M899.5 805V810M966.5 805V810M1033.5 805V810M1101.5 805V810" stroke="#333" stroke-width="1.45" fill="none"/>
<g font-family="'Liberation Sans', sans-serif" font-size="12.2" fill="#111">
<text transform="translate(75.2 775.3) scale(0.92 1)" text-anchor="end">-25.000</text>
<text transform="translate(75.2 729.3) scale(0.92 1)" text-anchor="end">-20.000</text>
<text transform="translate(75.2 683.3) scale(0.92 1)" text-anchor="end">-15.000</text>
<text transform="translate(75.2 638.3) scale(0.92 1)" text-anchor="end">-10.000</text>
<text transform="translate(75.2 592.3) scale(0.92 1)" text-anchor="end">-5.000</text>
<text transform="translate(75.2 546.3) scale(0.92 1)" text-anchor="end">0</text>
<text transform="translate(75.2 500.3) scale(0.92 1)" text-anchor="end">5.000</text>
<text transform="translate(75.2 455.3) scale(0.92 1)" text-anchor="end">10.000</text>
<text transform="translate(75.2 409.3) scale(0.92 1)" text-anchor="end">15.000</text>
<text transform="translate(75.2 363.3) scale(0.92 1)" text-anchor="end">20.000</text>
<text transform="translate(75.2 317.3) scale(0.92 1)" text-anchor="end">25.000</text>
<text transform="translate(75.2 272.3) scale(0.92 1)" text-anchor="end">30.000</text>
<text transform="translate(75.2 226.3) scale(0.92 1)" text-anchor="end">35.000</text>
<text transform="translate(75.2 180.3) scale(0.92 1)" text-anchor="end">40.000</text>
<text transform="translate(75.2 134.3) scale(0.92 1)" text-anchor="end">45.000</text>
<text transform="translate(75.2 89.3) scale(0.92 1)" text-anchor="end">50.000</text>
<text transform="translate(157.5 827.6) scale(0.92 1)" text-anchor="middle">2011</text>
<text transform="translate(225.5 827.6) scale(0.92 1)" text-anchor="middle">2012</text>
<text transform="translate(292.5 827.6) scale(0.92 1)" text-anchor="middle">2013</text>
<text transform="translate(360.5 827.6) scale(0.92 1)" text-anchor="middle">2014</text>
<text transform="translate(427.5 827.6) scale(0.92 1)" text-anchor="middle">2015</text>
<text transform="translate(494.5 827.6) scale(0.92 1)" text-anchor="middle">2016</text>
<text transform="translate(562.5 827.6) scale(0.92 1)" text-anchor="middle">2017</text>
<text transform="translate(629.5 827.6) scale(0.92 1)" text-anchor="middle">2018</text>
<text transform="translate(696.5 827.6) scale(0.92 1)" text-anchor="middle">2019</text>
<text transform="translate(764.5 827.6) scale(0.92 1)" text-anchor="middle">2020</text>
<text transform="translate(831.5 827.6) scale(0.92 1)" text-anchor="middle">2021</text>
<text transform="translate(899.5 827.6) scale(0.92 1)" text-anchor="middle">2022</text>
<text transform="translate(966.5 827.6) scale(0.92 1)" text-anchor="middle">2023</text>
<text transform="translate(1033.5 827.6) scale(0.92 1)" text-anchor="middle">2024</text>
<text transform="translate(1101.5 827.6) scale(0.92 1)" text-anchor="middle">2025</text>
<text transform="translate(560.7 847.8) scale(0.98 1)" text-anchor="middle">Date</text>
<text transform="translate(29.2 427) rotate(-90)" text-anchor="middle">Profit/Loss (€)</text>
<text transform="translate(462.3 865.9) scale(1.05 1)" text-anchor="start">Profit</text>
<text transform="translate(529.8 865.9) scale(0.91 1)" text-anchor="start">Loss</text>
<text transform="translate(591.2 865.9) scale(1.02 1)" text-anchor="start">Run-up</text>
<text transform="translate(669.2 865.9) scale(0.99 1)" text-anchor="start">Drawdown</text>
</g>
<rect x="449.5" y="855.2" width="6.2" height="13.4" fill="#228B22"/>
<rect x="517" y="855.2" width="6.2" height="13.4" fill="#FF0000"/>
<path d="M577.3 856H583.3V868H577.3M577.5 860.4L583.3 856.2M577.5 867.8L583.3 863.2" stroke="#228B22" stroke-width="1" fill="none"/>
<path d="M656.3 856H661.9V868H656.3M656.5 860.4L661.9 856.2M656.5 867.8L661.9 863.2" stroke="#FF0000" stroke-width="1" fill="none"/>
</svg>
</body></html>
